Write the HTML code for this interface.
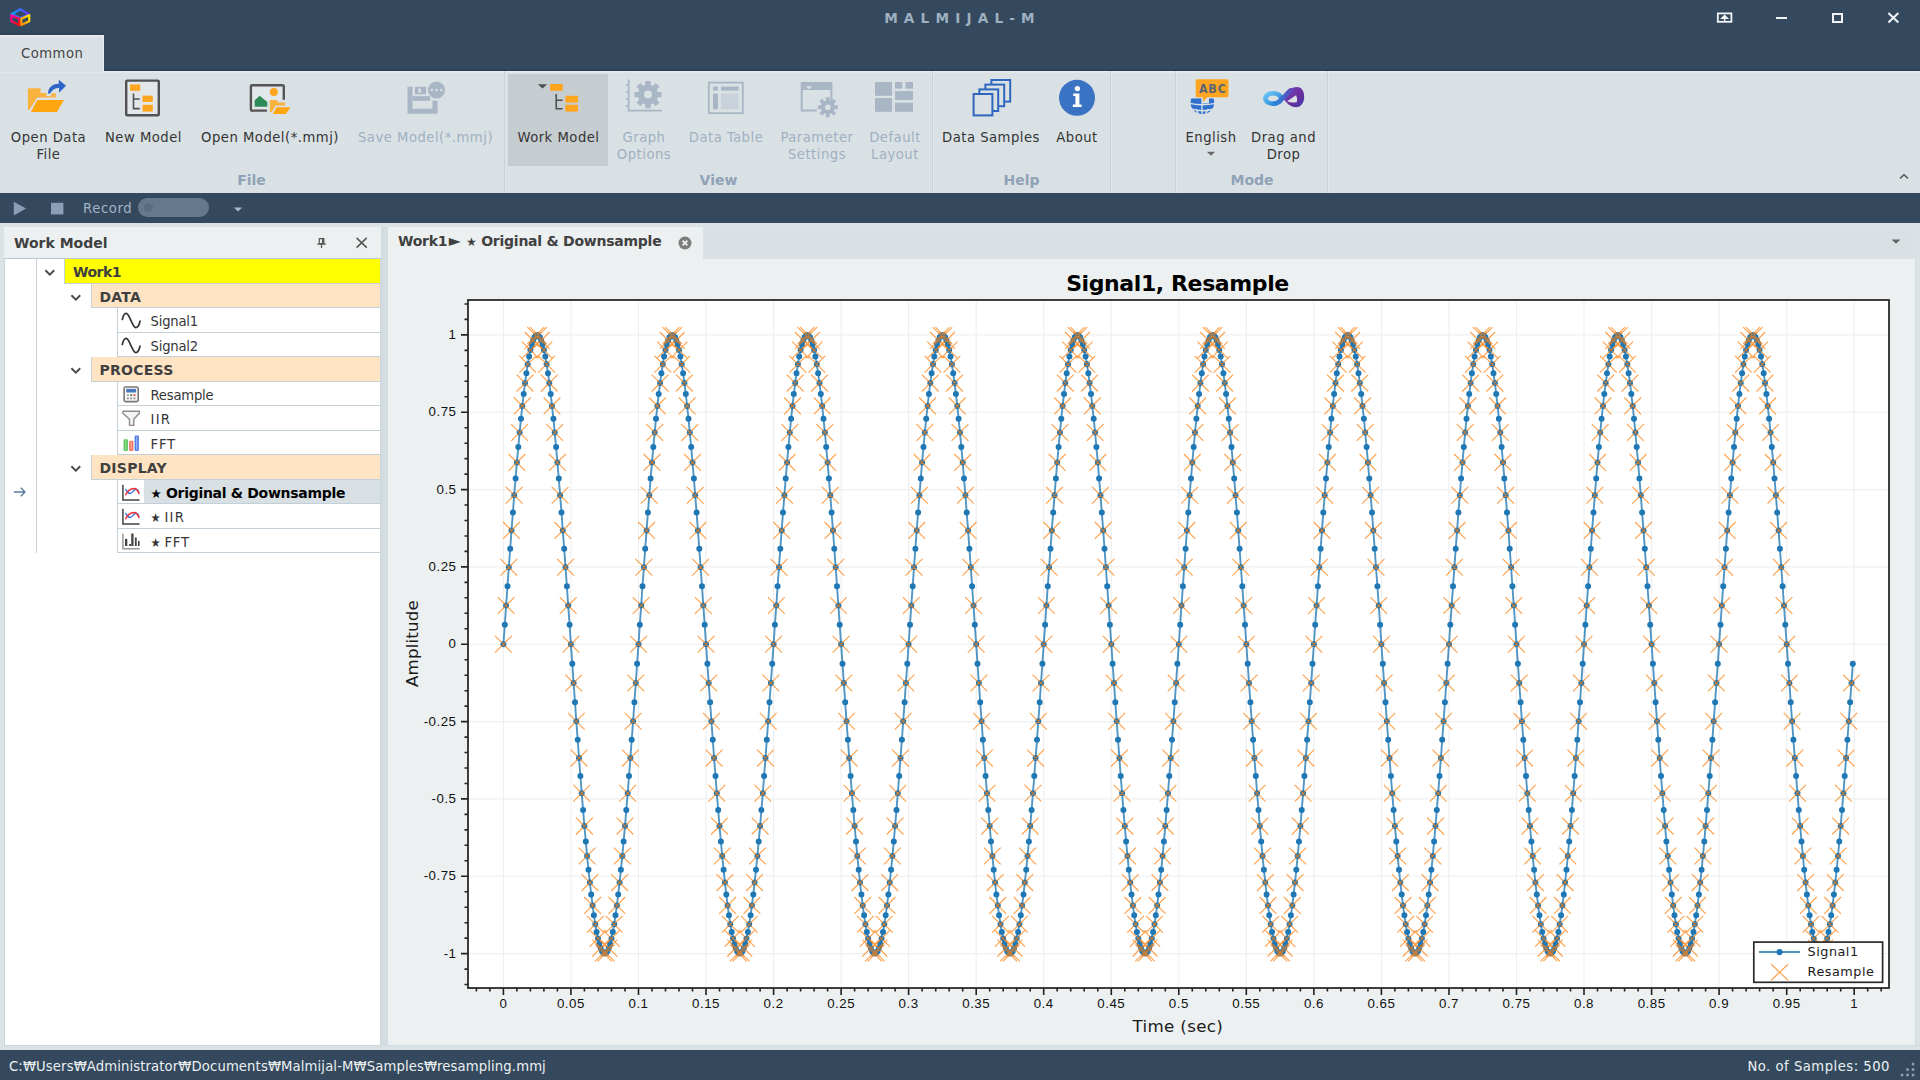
<!DOCTYPE html>
<html lang="en">
<head>
<meta charset="utf-8">
<title>MALMIJAL-M</title>
<style>
html,body{margin:0;padding:0;background:#dbe2e5;}
body{width:1920px;height:1080px;overflow:hidden;position:relative;
 font-family:"DejaVu Sans Condensed","Liberation Sans","Noto Sans CJK KR",sans-serif;font-size:14.67px;letter-spacing:.5px;color:#3b3b3b;}
.abs{position:absolute}
#titlebar{left:0;top:0;width:1920px;height:70.6px;background:#34495e;box-shadow:inset 0 -1.6px 0 #2d3f54}
#apptitle{left:0;top:10px;width:1920px;box-sizing:border-box;padding-left:5px;text-align:center;font-weight:bold;font-family:'DejaVu Sans','Liberation Sans',sans-serif;font-size:13.6px;letter-spacing:6.2px;color:#9fb0c0;line-height:17px}
#tabCommon{left:0;top:35px;width:104.4px;height:37.2px;background:#dae1e4;color:#454545;text-align:center;line-height:35px;box-sizing:border-box;box-shadow:0 -1.5px 0 #2e4056, inset 0 1.5px 0 #e8edef, inset -1px 0 0 #e6ebee}
#ribbon{left:0;top:70.6px;width:1920px;height:122.4px;background:#dae1e4;box-shadow:inset 0 1.4px 0 #e6ebee}
.sep{top:71px;width:1px;height:122px;background:#c8d1d6;box-shadow:1px 0 0 #e1e7ea}
.lbl{top:129px;width:200px;margin-left:-100px;text-align:center;line-height:16.5px;white-space:nowrap;color:#343434}
.lbl.dis{color:#9fb0c2}
.grp{top:171px;font-family:'DejaVu Sans','Liberation Sans',sans-serif;font-size:14px;letter-spacing:0;font-weight:bold;color:#8fa2b7;text-align:center;width:80px;margin-left:-40px;line-height:18px}
#quick{left:0;top:193px;width:1920px;height:30.3px;background:#34495e}
#status{left:0;top:1050px;width:1920px;height:30px;background:#34495e;color:#ecf0f1;line-height:32px}
#lp{left:4px;top:227px;width:377px;height:819px;background:#ecf0f1}
#lph{left:10px;top:6.2px;font-weight:bold;color:#404040;line-height:20px;font-family:'DejaVu Sans','Liberation Sans',sans-serif;font-size:14px;letter-spacing:0}
#tree{left:0;top:31px;width:377px;height:788px;background:#fff;border-top:1px solid #b9c9d4;box-sizing:border-box;border-left:1px solid #c9d5dc;border-right:1px solid #c9d5dc;border-bottom:1px solid #cfd9de}
.row{position:absolute;right:0;height:24.5px;box-sizing:border-box;border-bottom:1px solid #c3d0d8;border-left:1px solid #c3d0d8;line-height:24.5px;white-space:nowrap;color:#363636}
.row b{color:#404040;font-family:'DejaVu Sans','Liberation Sans',sans-serif;font-size:14px;letter-spacing:inherit}
.row.lf{letter-spacing:-.2px;line-height:25.9px}
.st{font-size:12.5px}
.tri{font-size:15.5px;line-height:10px;margin-left:1.5px;position:relative;top:.3px}
.st2{font-size:12px;margin-left:1px}
.chev{position:absolute}
#doc{left:388px;top:227px;width:1528px;height:819px;background:#ecf0f1;box-sizing:border-box;border-bottom:1px solid #d3dce1;border-right:1px solid #d3dce1}
#tabstrip{left:315px;top:0;width:1213px;height:32px;background:#dae1e4}
#doctab{left:10px;top:4.1px;font-weight:bold;color:#404040;line-height:20px;white-space:nowrap;font-family:'DejaVu Sans','Liberation Sans',sans-serif;font-size:14px;letter-spacing:-.25px}
</style>
</head>
<body>
<div id="titlebar" class="abs"></div>
<svg class="abs" style="left:8px;top:6px" width="24" height="22" viewBox="8 6 24 22">
<defs>
<linearGradient id="cg1" x1="0" y1="0" x2="1" y2="0"><stop offset="0" stop-color="#08a8ff"/><stop offset="1" stop-color="#6a2cff"/></linearGradient>
<linearGradient id="cg2" x1="0" y1="0" x2="0.6" y2="1"><stop offset="0" stop-color="#ff00b0"/><stop offset="1" stop-color="#ff0a18"/></linearGradient>
<linearGradient id="cg3" x1="1" y1="0" x2="0" y2="1"><stop offset="0" stop-color="#ffe600"/><stop offset="1" stop-color="#ff8a00"/></linearGradient>
</defs>
<path d="M20.300 9.300L29 14.200L20.300 18L11.600 14.200Z" fill="none" stroke="url(#cg1)" stroke-width="2.300" stroke-linejoin="round"/>
<path d="M11.400 15.200L19.300 18.800V25L11.400 21.300Z" fill="none" stroke="url(#cg2)" stroke-width="2.300" stroke-linejoin="round"/>
<path d="M29.200 15.200L21.300 18.800V25L29.200 21.300Z" fill="none" stroke="url(#cg3)" stroke-width="2.300" stroke-linejoin="round"/>
</svg>
<div id="apptitle" class="abs">MALMIJAL-M</div>
<svg class="abs" style="left:1714px;top:10px" width="22" height="16" viewBox="1714 10 22 16">
<rect x="1717.800" y="13.400" width="13.600" height="8.400" fill="none" stroke="#f2f4f6" stroke-width="1.800"/>
<path d="M1724.600 21V16.500M1721.800 18.300L1724.600 15.500L1727.400 18.300Z" fill="#f2f4f6" stroke="#f2f4f6" stroke-width="1.400"/>
</svg>
<div class="abs" style="left:1776px;top:17px;width:11px;height:2px;background:#f2f4f6"></div>
<div class="abs" style="left:1832px;top:13px;width:10.500px;height:9.500px;box-sizing:border-box;border:2px solid #f2f4f6"></div>
<svg class="abs" style="left:1886px;top:11px" width="14" height="14" viewBox="1886 11 14 14"><path d="M1888.400 13L1898.400 22.400M1898.400 13L1888.400 22.400" stroke="#f2f4f6" stroke-width="2" fill="none"/></svg>

<div id="ribbon" class="abs"></div>
<div id="tabCommon" class="abs">Common</div>
<div class="abs" style="left:508px;top:74px;width:100px;height:92px;background:#c6cdd1"></div>
<div class="abs sep" style="left:504px"></div>
<div class="abs sep" style="left:932px"></div>
<div class="abs sep" style="left:1110px"></div>
<div class="abs sep" style="left:1175px"></div>
<div class="abs sep" style="left:1327px"></div>
<!-- Open Data File -->
<svg class="abs" style="left:24px;top:76px" width="46" height="40" viewBox="24 76 46 40">
<path d="M27.900 88.300H40.600V93.100H46.100L46.500 96.200H51L51.500 93.300H55.800V97.600H37.100L29.200 110L27.900 109.500Z" fill="#fab23f"/>
<path d="M37.300 100.100H64L56.900 111.900H30.800Z" fill="#ffa50f"/>
<path d="M48 93.400C48.300 87.500 52.500 83.600 58.800 83.800V79.700L66 85.800L59.100 92.700V88C55 87.900 51.800 89.900 50.200 93.600Z" fill="#2f65c8"/>
</svg>
<!-- New Model -->
<svg class="abs" style="left:122px;top:76px" width="42" height="44" viewBox="122 76 42 44">
<rect x="126.200" y="80.600" width="32.600" height="34.600" rx="1" fill="#e2e7ea" stroke="#525252" stroke-width="2.400"/>
<path d="M133.500 93.500V108.600H139.800M133.500 99H139.800" fill="none" stroke="#505050" stroke-width="1.6"/>
<g fill="#ffa51f"><rect x="130" y="84.4" width="10.2" height="6.4"/><rect x="142.5" y="95.6" width="10.3" height="6.4"/><rect x="142.5" y="104.8" width="10.3" height="6.8"/></g>
</svg>
<!-- Open Model -->
<svg class="abs" style="left:246px;top:80px" width="48" height="38" viewBox="246 80 48 38">
<path d="M252 86.300H282.600V100H268V109.500H252Z" fill="#e2e7ea"/>
<path d="M267 110.600H252.400A1.100 1.100 0 0 1 250.900 109.500V86.300A1.100 1.100 0 0 1 252 85.200H282.700A1.100 1.100 0 0 1 283.800 86.300V99.800" fill="none" stroke="#555" stroke-width="2.400"/>
<path d="M254.700 106.700V100.200L259.700 95.800L267.300 102V106.700Z" fill="#2e8b57"/>
<circle cx="273.800" cy="91.900" r="4" fill="#ffa51f"/>
<path d="M269.900 100H276.600L278.300 102.600H285.100V105.600H275.600L271.400 112.600L269.900 112Z" fill="#fab23f"/>
<path d="M276.600 107.300H290.500L285.900 114.100H272.700Z" fill="#ffa50f"/>
</svg>
<!-- Save Model (disabled) -->
<svg class="abs" style="left:404px;top:78px" width="46" height="40" viewBox="404 78 46 40">
<g fill="#a9b6c6">
<path d="M407.5 86.8H412.5V108.8H432.5V100.8H437.5V113.7H407.5Z"/>
<path d="M412.5 96.2H430V100.8H412.5Z"/>
<path d="M415 86.8H426V94.3H415ZM418.2 88.6V92.6H421V88.6Z" fill-rule="evenodd"/>
<circle cx="436.5" cy="90" r="8.6"/>
</g>
<g fill="#dae1e4"><circle cx="431.7" cy="90" r="1.3"/><circle cx="436.5" cy="90" r="1.3"/><circle cx="441.3" cy="90" r="1.3"/></g>
</svg>
<!-- Work Model -->
<svg class="abs" style="left:534px;top:80px" width="48" height="36" viewBox="534 80 48 36">
<path d="M537.8 84.2H547.2L542.5 88.6Z" fill="#505050"/>
<path d="M556.2 94V108.8H562.6M556.2 100.2H562.6" fill="none" stroke="#505050" stroke-width="1.6"/>
<g fill="#ffa51f"><rect x="550" y="84" width="12.8" height="6.8"/><rect x="565.4" y="95.8" width="12.6" height="6.8"/><rect x="565.4" y="104.8" width="12.6" height="6.8"/></g>
</svg>
<!-- Graph Options (disabled) -->
<svg class="abs" style="left:622px;top:76px" width="44" height="40" viewBox="622 76 44 40">
<path d="M628.6 79.5V110.6H662" fill="none" stroke="#a9b6c6" stroke-width="1.7"/>
<path d="M625.7 84.9H628M625.7 92H628M625.7 99H628M625.7 106H628" stroke="#a9b6c6" stroke-width="1.5"/>
<g transform="translate(648 94.6)" fill="#a9b6c6">
<circle r="10.2"/>
<g id="gt"><rect x="-2.700" y="-13.600" width="5.400" height="27.200" rx=".6"/></g>
<use href="#gt" transform="rotate(45)"/><use href="#gt" transform="rotate(90)"/><use href="#gt" transform="rotate(135)"/>
<circle r="4" fill="#dae1e4"/>
</g>
</svg>
<!-- Data Table (disabled) -->
<svg class="abs" style="left:704px;top:78px" width="44" height="40" viewBox="704 78 44 40">
<rect x="708.8" y="82.6" width="34" height="30.6" fill="none" stroke="#a9b6c6" stroke-width="1.8"/>
<g fill="#a9b6c6"><rect x="713" y="86.6" width="5" height="4"/><rect x="721" y="86.6" width="17.6" height="4"/><rect x="713" y="93.6" width="5" height="15.6"/></g>
<rect x="721" y="93.6" width="17.6" height="15.6" fill="#c9d2da"/>
</svg>
<!-- Parameter Settings (disabled) -->
<svg class="abs" style="left:796px;top:78px" width="46" height="42" viewBox="796 78 46 42">
<path d="M800.7 82H832.4V103H830.4V90H802.7V109.5H817V111.5H800.7Z" fill="#a9b6c6"/>
<path d="M805.5 86.2H812.5L809 89.2Z" fill="#dae1e4"/>
<g transform="translate(827.8 107.2)" fill="#a9b6c6">
<circle r="7"/>
<g id="gt2"><rect x="-1.9" y="-10" width="3.8" height="20"/></g>
<use href="#gt2" transform="rotate(45)"/><use href="#gt2" transform="rotate(90)"/><use href="#gt2" transform="rotate(135)"/>
<circle r="2.8" fill="#dae1e4"/>
</g>
</svg>
<!-- Default Layout (disabled) -->
<svg class="abs" style="left:872px;top:80px" width="44" height="34" viewBox="872 80 44 34">
<g fill="#a9b6c6"><rect x="875" y="82" width="17" height="13.8"/><rect x="875" y="98" width="17" height="13.8"/><rect x="895" y="82" width="7.4" height="6.6"/><rect x="905.4" y="82" width="7.6" height="6.6"/><rect x="895" y="91" width="18" height="9"/><rect x="895" y="102.6" width="18" height="9.2"/></g>
</svg>
<!-- Data Samples -->
<svg class="abs" style="left:970px;top:76px" width="44" height="44" viewBox="970 76 44 44">
<g fill="#dae1e4" stroke="#2e66c0" stroke-width="2"><rect x="991.4" y="80" width="18.8" height="21.6"/><rect x="985.4" y="84.6" width="18.8" height="21.6"/><rect x="979.4" y="89.4" width="18.8" height="21.6"/><rect x="973.6" y="94" width="18.8" height="21.4"/></g>
</svg>
<!-- About -->
<svg class="abs" style="left:1056px;top:78px" width="42" height="42" viewBox="1056 78 42 42">
<circle cx="1077" cy="97.8" r="18" fill="#3a72c4"/>
<circle cx="1077.4" cy="88.6" r="2.6" fill="#fff"/>
<path d="M1073.2 93.4H1079.4V104.4H1081.6V107H1072.8V104.4H1075.4V96H1073.2Z" fill="#fff"/>
</svg>
<!-- English -->
<svg class="abs" style="left:1186px;top:76px" width="46" height="42" viewBox="1186 76 46 42">
<defs><clipPath id="gclip"><path d="M1188 98.600H1201.600V103.600H1209V98.600H1217V116H1188Z"/></clipPath></defs>
<g clip-path="url(#gclip)">
<circle cx="1202.400" cy="102.400" r="11.800" fill="#2f6fd0"/>
<path d="M1202 89V116M1189.500 103.400Q1202 106 1215.500 103.400M1192 109.200Q1202 112.200 1213 109.200M1196 109Q1197 112 1199.500 115M1208 109Q1207 112 1204.500 115" stroke="#dae1e4" stroke-width="1.400" fill="none"/>
</g>
<path d="M1196.900 79.250H1227.300A1.200 1.200 0 0 1 1228.500 80.450V96.100A1.200 1.200 0 0 1 1227.300 97.300H1207.400L1203 101.900V97.300H1196.900A1.200 1.200 0 0 1 1195.700 96.100V80.450A1.200 1.200 0 0 1 1196.900 79.250Z" fill="#ffa51f"/>
<text x="1212.800" y="92.900" text-anchor="middle" font-family="'DejaVu Sans Condensed','Liberation Sans',sans-serif" font-weight="bold" font-size="12.300" fill="#5a6474" letter-spacing="0.900">ABC</text>
</svg>
<!-- Drag and Drop -->
<svg class="abs" style="left:1258px;top:82px" width="50" height="30" viewBox="1258 82 50 30">
<defs>
<linearGradient id="lgb" x1="0" y1="0" x2="1" y2="1"><stop offset="0" stop-color="#6cc6f2"/><stop offset="1" stop-color="#1f7fd6"/></linearGradient>
<linearGradient id="lgp" x1="0" y1="0" x2="1" y2="1"><stop offset="0" stop-color="#7a4cc0"/><stop offset=".6" stop-color="#6a2c9c"/><stop offset="1" stop-color="#3a44b0"/></linearGradient>
<linearGradient id="lgx" x1="0" y1="1" x2="1" y2="0"><stop offset="0" stop-color="#2a86da"/><stop offset="1" stop-color="#5a48b8"/></linearGradient>
</defs>
<path d="M1283 98C1285 91 1291 87 1297 87C1302 87 1304.200 91.500 1304.200 97C1304.200 103 1301 107.200 1296 107.200C1290.500 107.200 1286 103 1283 98ZM1287 101.300L1296 95.300C1297.200 97.500 1297.400 100 1296.700 102.200C1293.500 103 1290 102.600 1287 101.300Z" fill="url(#lgp)" fill-rule="evenodd"/>
<ellipse cx="1273.200" cy="98.400" rx="7.800" ry="5.200" fill="none" stroke="url(#lgb)" stroke-width="4.600"/>
<path d="M1274.500 103.800C1280 103 1284 96 1290.500 90.500" fill="none" stroke="url(#lgx)" stroke-width="4.600" stroke-linecap="round"/>
</svg>
<!-- labels -->
<div class="abs lbl" style="left:48.500px">Open Data<br>File</div>
<div class="abs lbl" style="left:143.500px">New Model</div>
<div class="abs lbl" style="left:270px">Open Model(*.mmj)</div>
<div class="abs lbl dis" style="left:425.500px">Save Model(*.mmj)</div>
<div class="abs lbl" style="left:558.500px">Work Model</div>
<div class="abs lbl dis" style="left:644px">Graph<br>Options</div>
<div class="abs lbl dis" style="left:726px">Data Table</div>
<div class="abs lbl dis" style="left:817px">Parameter<br>Settings</div>
<div class="abs lbl dis" style="left:895px">Default<br>Layout</div>
<div class="abs lbl" style="left:991px">Data Samples</div>
<div class="abs lbl" style="left:1077px">About</div>
<div class="abs lbl" style="left:1211px">English</div>
<div class="abs lbl" style="left:1283.500px">Drag and<br>Drop</div>
<svg class="abs" style="left:1205px;top:150px" width="12" height="8" viewBox="0 0 12 8"><path d="M1.800 1.800H10.200L6 5.800Z" fill="#6a6a6a"/></svg>
<div class="abs grp" style="left:251.500px">File</div>
<div class="abs grp" style="left:718.500px">View</div>
<div class="abs grp" style="left:1021.500px">Help</div>
<div class="abs grp" style="left:1252px">Mode</div>
<svg class="abs" style="left:1898px;top:172px" width="12" height="10" viewBox="0 0 12 10"><path d="M2 6.500L6 2.800L10 6.500" fill="none" stroke="#555" stroke-width="1.500"/></svg>

<div id="quick" class="abs">
<svg class="abs" style="left:10px;top:6px" width="60" height="20" viewBox="10 199 60 20">
<path d="M13.800 201.800V215.400L26 208.600Z" fill="#8a9fb6"/>
<rect x="51" y="202.800" width="12.400" height="11.600" fill="#8a9fb6"/>
</svg>
<div class="abs" style="left:83px;top:5.300px;color:#a3b4c6;line-height:20px;letter-spacing:.65px">Record</div>
<div class="abs" style="left:138px;top:5.100px;width:70.500px;height:19px;border-radius:9.500px;background:#66798c"></div>
<div class="abs" style="left:143.500px;top:10.100px;width:9px;height:9px;border-radius:5px;background:#5b6d7f"></div>
<svg class="abs" style="left:232px;top:13px" width="12" height="8" viewBox="0 0 12 8"><path d="M1.800 1.500H10.200L6 5.600Z" fill="#a9b8c8"/></svg>

</div>
<div id="lp" class="abs">
<div id="lph" class="abs">Work Model</div>
<svg class="abs" style="left:310px;top:8px" width="14" height="16" viewBox="314 235 14 16">
<path d="M319.300 238.600H323.800V243.600H319.300ZM317.300 244.200H325.800M321.500 244.400V247.900" fill="none" stroke="#555" stroke-width="1.200"/><rect x="322" y="238.600" width="1.800" height="5" fill="#555"/>
</svg>
<svg class="abs" style="left:350px;top:8px" width="16" height="16" viewBox="354 235 16 16"><path d="M356.600 237.900L366.700 247.600M366.700 237.900L356.600 247.600" stroke="#555" stroke-width="1.500" fill="none"/></svg>

<div id="tree" class="abs">
<div class="abs" style="left:30.500px;top:0;width:1px;height:293.500px;background:#c9d5dc"></div>
<div class="row" style="top:0.0px;left:58.500px;background:#ff0;padding-left:8.500px;line-height:25px"><b style="letter-spacing:-.5px">Work1</b></div>
<svg class="chev" style="left:38.6px;top:10.0px" width="12" height="8" viewBox="0 0 12 8"><path d="M1.400 1.300L5.800 5.600L10.200 1.300" fill="none" stroke="#484848" stroke-width="1.900"/></svg>
<div class="row" style="top:24.5px;left:86px;background:#ffe4c4;padding-left:7.500px;line-height:26px;letter-spacing:.25px"><b>DATA</b></div>
<svg class="chev" style="left:65.4px;top:34.5px" width="12" height="8" viewBox="0 0 12 8"><path d="M1.400 1.300L5.800 5.600L10.200 1.300" fill="none" stroke="#484848" stroke-width="1.900"/></svg>
<div class="row lf" style="top:49.0px;left:112px;padding-left:32.500px"><svg width="26" height="24" viewBox="0 0 26 24" style="position:absolute;left:0;top:0"><path d="M4.300 11.500C5.300 7 6.800 5.400 8.300 5.400C11.300 5.400 14.500 19.600 17.700 19.600C19.400 19.600 21 17.500 22 13.200" fill="none" stroke="#333" stroke-width="1.700" stroke-linecap="round"/></svg>Signal1</div>
<div class="row lf" style="top:73.5px;left:112px;padding-left:32.500px"><svg width="26" height="24" viewBox="0 0 26 24" style="position:absolute;left:0;top:0"><path d="M4.300 11.500C5.300 7 6.800 5.400 8.300 5.400C11.300 5.400 14.500 19.600 17.700 19.600C19.400 19.600 21 17.500 22 13.200" fill="none" stroke="#333" stroke-width="1.700" stroke-linecap="round"/></svg>Signal2</div>
<div class="row" style="top:98.0px;left:86px;background:#ffe4c4;padding-left:7.500px;line-height:26px;letter-spacing:.25px"><b>PROCESS</b></div>
<svg class="chev" style="left:65.4px;top:108.0px" width="12" height="8" viewBox="0 0 12 8"><path d="M1.400 1.300L5.800 5.600L10.200 1.300" fill="none" stroke="#484848" stroke-width="1.900"/></svg>
<div class="row lf" style="top:122.5px;left:112px;padding-left:32.500px"><svg width="26" height="24" viewBox="0 0 26 24" style="position:absolute;left:0;top:0"><rect x="6.100" y="5" width="14.100" height="14.600" rx="1.600" fill="#f8f8f8" stroke="#777" stroke-width="1.600"/><rect x="8.200" y="6.900" width="9.900" height="3.600" fill="#4a78c2"/><g fill="#9a9a9a"><rect x="8.900" y="12.400" width="2" height="1.600"/><rect x="12.200" y="12.400" width="2" height="1.600"/><rect x="8.900" y="15.400" width="2" height="1.900"/><rect x="12.200" y="15.400" width="2" height="1.900"/><rect x="15.500" y="15.400" width="2" height="1.900"/></g><rect x="15.500" y="12.400" width="2" height="1.600" fill="#e0443e"/><rect x="12.200" y="12.400" width="2" height="1.600" fill="#5a8a5a"/></svg>Resample</div>
<div class="row lf" style="top:147.0px;left:112px;padding-left:32.500px"><svg width="26" height="24" viewBox="0 0 26 24" style="position:absolute;left:0;top:0"><path d="M4.900 5.300H21.400V7.200L15.800 13.300V19.400H11.500V13.300L4.900 7.200Z" fill="#f4f4f4" stroke="#8c8c8c" stroke-width="1.400" stroke-linejoin="round"/></svg><span style="letter-spacing:1.300px">IIR</span></div>
<div class="row lf" style="top:171.5px;left:112px;padding-left:32.500px"><svg width="26" height="24" viewBox="0 0 26 24" style="position:absolute;left:0;top:0"><rect x="5.600" y="8.200" width="4.300" height="11.800" rx="1.200" fill="#58c058"/><rect x="7" y="9" width="1.400" height="10" fill="#8fe08f"/><rect x="11.100" y="9.700" width="4.300" height="10.300" rx="1.200" fill="#f0705a"/><rect x="12.500" y="10.500" width="1.400" height="8.500" fill="#f8a898"/><rect x="16.600" y="4.600" width="4.300" height="15.400" rx="1.200" fill="#4f80e6"/><rect x="18" y="5.500" width="1.400" height="13.500" fill="#8fb0f4"/></svg><span style="letter-spacing:.8px">FFT</span></div>
<div class="row" style="top:196.0px;left:86px;background:#ffe4c4;padding-left:7.500px;line-height:26px;letter-spacing:.25px"><b>DISPLAY</b></div>
<svg class="chev" style="left:65.4px;top:206.0px" width="12" height="8" viewBox="0 0 12 8"><path d="M1.400 1.300L5.800 5.600L10.200 1.300" fill="none" stroke="#484848" stroke-width="1.900"/></svg>
<div class="row lf" style="top:220.5px;left:112px;padding-left:32.500px"><svg width="26" height="24" viewBox="0 0 26 24" style="position:absolute;left:0;top:0"><path d="M4.900 4.700V19.900H21.600" fill="none" stroke="#444" stroke-width="1.500"/><path d="M7.500 9C9 11 10 13.500 12 13.500C14.500 13.500 15.500 9.200 18 9.200C19.500 9.200 20.500 11 21 12.500" fill="none" stroke="#3f78e0" stroke-width="1.500"/><path d="M7.500 15.200C9.500 11 12.500 8.200 16.400 8.400C18.800 8.600 20.200 11 21 14" fill="none" stroke="#f0303a" stroke-width="1.500"/></svg><div class="abs" style="left:26.300px;top:0;right:0;bottom:0;background:#d9e0e3"></div><b style="color:#000;position:relative;font-size:14px;letter-spacing:-.3px"><span class="st">★</span> Original &amp; Downsample</b></div>
<div class="row lf" style="top:245.0px;left:112px;padding-left:32.500px"><svg width="26" height="24" viewBox="0 0 26 24" style="position:absolute;left:0;top:0"><path d="M4.900 4.700V19.900H21.600" fill="none" stroke="#444" stroke-width="1.500"/><path d="M7.500 9C9 11 10 13.500 12 13.500C14.500 13.500 15.500 9.200 18 9.200C19.500 9.200 20.500 11 21 12.500" fill="none" stroke="#3f78e0" stroke-width="1.500"/><path d="M7.500 15.200C9.500 11 12.500 8.200 16.400 8.400C18.800 8.600 20.200 11 21 14" fill="none" stroke="#f0303a" stroke-width="1.500"/></svg><span class="st">★</span> <span style="letter-spacing:1.300px">IIR</span></div>
<div class="row lf" style="top:269.5px;left:112px;padding-left:32.500px"><svg width="26" height="24" viewBox="0 0 26 24" style="position:absolute;left:0;top:0"><path d="M4.900 4.700V19.800H21.600" fill="none" stroke="#999" stroke-width="1.500"/><g fill="#444"><rect x="7" y="9.900" width="2.300" height="7.100"/><rect x="11.200" y="15" width="1.800" height="2"/><rect x="13.250" y="4.500" width="2.300" height="12.500"/><rect x="16.900" y="8.400" width="1.800" height="8.600"/><rect x="20" y="12" width="1.600" height="5"/></g></svg><span class="st">★</span> <span style="letter-spacing:.8px">FFT</span></div>
<svg class="abs" style="left:8px;top:227px" width="14" height="12" viewBox="0 0 14 12"><path d="M1 6H12M7.800 1.800L12 6L7.800 10.200" fill="none" stroke="#5a7a9a" stroke-width="1.300"/></svg>

</div>
</div>
<div class="abs" style="left:381px;top:227px;width:7px;height:819px;background:#d3dce1"></div>
<div id="doc" class="abs">
<div id="tabstrip" class="abs"></div>
<div id="doctab" class="abs">Work1<span class="tri">►</span> <span class="st2">★</span> Original &amp; Downsample</div>
<svg class="abs" style="left:290px;top:8.500px" width="14" height="14" viewBox="0 0 14 14"><circle cx="7" cy="7" r="6.500" fill="#7d7d7d"/><path d="M4.600 4.600L9.400 9.400M9.400 4.600L4.600 9.400" stroke="#ecf0f1" stroke-width="1.800"/></svg>
<svg class="abs" style="left:1502px;top:11px" width="12" height="8" viewBox="0 0 12 8"><path d="M1.500 1.500H10.500L6 5.800Z" fill="#666"/></svg>

</div>
<svg id="plot" width="1528" height="787" viewBox="388 259 1528 787" style="position:absolute;left:388px;top:259px">
<rect x="468.0" y="300.0" width="1421.0" height="688.0" fill="#fff"/>
<path d="M503.4 300.0V988.0M570.9 300.0V988.0M638.5 300.0V988.0M706.0 300.0V988.0M773.6 300.0V988.0M841.1 300.0V988.0M908.6 300.0V988.0M976.2 300.0V988.0M1043.7 300.0V988.0M1111.3 300.0V988.0M1178.8 300.0V988.0M1246.3 300.0V988.0M1313.9 300.0V988.0M1381.4 300.0V988.0M1449.0 300.0V988.0M1516.5 300.0V988.0M1584.0 300.0V988.0M1651.6 300.0V988.0M1719.1 300.0V988.0M1786.7 300.0V988.0M1854.2 300.0V988.0M468.0 953.6H1889.0M468.0 876.3H1889.0M468.0 798.9H1889.0M468.0 721.6H1889.0M468.0 644.2H1889.0M468.0 566.9H1889.0M468.0 489.6H1889.0M468.0 412.2H1889.0M468.0 334.9H1889.0" stroke="#efefef" stroke-width="1.1" fill="none"/>
<polyline fill="none" stroke="#1f77b4" stroke-opacity="0.78" stroke-width="1.900" stroke-linejoin="round" points="503.4,644.2 504.8,624.8 506.1,605.5 507.5,586.3 508.8,567.3 510.2,548.7 511.5,530.4 512.9,512.5 514.2,495.2 515.6,478.5 516.9,462.4 518.3,447.1 519.6,432.5 521.0,418.7 522.3,405.9 523.7,394.0 525.0,383.1 526.4,373.2 527.7,364.3 529.1,356.6 530.4,350.0 531.8,344.6 533.1,340.4 534.5,337.3 535.8,335.5 537.2,334.9 538.5,335.5 539.9,337.3 541.2,340.4 542.6,344.6 543.9,350.0 545.3,356.6 546.6,364.3 548.0,373.2 549.3,383.1 550.7,394.0 552.0,405.9 553.4,418.7 554.7,432.5 556.1,447.1 557.4,462.4 558.8,478.5 560.1,495.2 561.5,512.5 562.8,530.4 564.2,548.7 565.5,567.3 566.9,586.3 568.2,605.5 569.6,624.8 570.9,644.2 572.3,663.7 573.6,683.0 575.0,702.2 576.3,721.2 577.7,739.8 579.0,758.1 580.4,776.0 581.7,793.3 583.1,810.0 584.4,826.1 585.8,841.4 587.1,856.0 588.5,869.8 589.9,882.6 591.2,894.5 592.6,905.4 593.9,915.3 595.3,924.2 596.6,931.9 598.0,938.5 599.3,943.9 600.7,948.1 602.0,951.2 603.4,953.0 604.7,953.6 606.1,953.0 607.4,951.2 608.8,948.1 610.1,943.9 611.5,938.5 612.8,931.9 614.2,924.2 615.5,915.3 616.9,905.4 618.2,894.5 619.6,882.6 620.9,869.8 622.3,856.0 623.6,841.4 625.0,826.1 626.3,810.0 627.7,793.3 629.0,776.0 630.4,758.1 631.7,739.8 633.1,721.2 634.4,702.2 635.8,683.0 637.1,663.7 638.5,644.3 639.8,624.8 641.2,605.5 642.5,586.3 643.9,567.3 645.2,548.7 646.6,530.4 647.9,512.5 649.3,495.2 650.6,478.5 652.0,462.4 653.3,447.1 654.7,432.5 656.0,418.7 657.4,405.9 658.7,394.0 660.1,383.1 661.4,373.2 662.8,364.3 664.1,356.6 665.5,350.0 666.8,344.6 668.2,340.4 669.5,337.3 670.9,335.5 672.2,334.9 673.6,335.5 675.0,337.3 676.3,340.4 677.7,344.6 679.0,350.0 680.4,356.6 681.7,364.3 683.1,373.2 684.4,383.1 685.8,394.0 687.1,405.9 688.5,418.7 689.8,432.5 691.2,447.1 692.5,462.4 693.9,478.5 695.2,495.2 696.6,512.5 697.9,530.4 699.3,548.7 700.6,567.3 702.0,586.3 703.3,605.5 704.7,624.8 706.0,644.2 707.4,663.7 708.7,683.0 710.1,702.2 711.4,721.2 712.8,739.8 714.1,758.1 715.5,776.0 716.8,793.3 718.2,810.0 719.5,826.1 720.9,841.4 722.2,856.0 723.6,869.8 724.9,882.6 726.3,894.5 727.6,905.4 729.0,915.3 730.3,924.2 731.7,931.9 733.0,938.5 734.4,943.9 735.7,948.1 737.1,951.2 738.4,953.0 739.8,953.6 741.1,953.0 742.5,951.2 743.8,948.1 745.2,943.9 746.5,938.5 747.9,931.9 749.2,924.2 750.6,915.3 751.9,905.4 753.3,894.5 754.6,882.6 756.0,869.8 757.4,856.0 758.7,841.4 760.1,826.1 761.4,810.0 762.8,793.3 764.1,776.0 765.5,758.1 766.8,739.8 768.2,721.2 769.5,702.2 770.9,683.0 772.2,663.7 773.6,644.3 774.9,624.8 776.3,605.5 777.6,586.3 779.0,567.3 780.3,548.7 781.7,530.4 783.0,512.5 784.4,495.2 785.7,478.5 787.1,462.4 788.4,447.1 789.8,432.5 791.1,418.7 792.5,405.9 793.8,394.0 795.2,383.1 796.5,373.2 797.9,364.3 799.2,356.6 800.6,350.0 801.9,344.6 803.3,340.4 804.6,337.3 806.0,335.5 807.3,334.9 808.7,335.5 810.0,337.3 811.4,340.4 812.7,344.6 814.1,350.0 815.4,356.6 816.8,364.3 818.1,373.2 819.5,383.1 820.8,394.0 822.2,405.9 823.5,418.7 824.9,432.5 826.2,447.1 827.6,462.4 828.9,478.5 830.3,495.2 831.6,512.5 833.0,530.4 834.3,548.7 835.7,567.3 837.0,586.3 838.4,605.5 839.7,624.8 841.1,644.2 842.5,663.7 843.8,683.0 845.2,702.2 846.5,721.2 847.9,739.8 849.2,758.1 850.6,776.0 851.9,793.3 853.3,810.0 854.6,826.1 856.0,841.4 857.3,856.0 858.7,869.8 860.0,882.6 861.4,894.5 862.7,905.4 864.1,915.3 865.4,924.2 866.8,931.9 868.1,938.5 869.5,943.9 870.8,948.1 872.2,951.2 873.5,953.0 874.9,953.6 876.2,953.0 877.6,951.2 878.9,948.1 880.3,943.9 881.6,938.5 883.0,931.9 884.3,924.2 885.7,915.3 887.0,905.4 888.4,894.5 889.7,882.6 891.1,869.8 892.4,856.0 893.8,841.4 895.1,826.1 896.5,810.0 897.8,793.3 899.2,776.0 900.5,758.1 901.9,739.8 903.2,721.2 904.6,702.2 905.9,683.0 907.3,663.7 908.6,644.3 910.0,624.8 911.3,605.5 912.7,586.3 914.0,567.3 915.4,548.7 916.7,530.4 918.1,512.5 919.4,495.2 920.8,478.5 922.1,462.4 923.5,447.1 924.8,432.5 926.2,418.7 927.6,405.9 928.9,394.0 930.3,383.1 931.6,373.2 933.0,364.3 934.3,356.6 935.7,350.0 937.0,344.6 938.4,340.4 939.7,337.3 941.1,335.5 942.4,334.9 943.8,335.5 945.1,337.3 946.5,340.4 947.8,344.6 949.2,350.0 950.5,356.6 951.9,364.3 953.2,373.2 954.6,383.1 955.9,394.0 957.3,405.9 958.6,418.7 960.0,432.5 961.3,447.1 962.7,462.4 964.0,478.5 965.4,495.2 966.7,512.5 968.1,530.4 969.4,548.7 970.8,567.3 972.1,586.3 973.5,605.5 974.8,624.8 976.2,644.2 977.5,663.7 978.9,683.0 980.2,702.2 981.6,721.2 982.9,739.8 984.3,758.1 985.6,776.0 987.0,793.3 988.3,810.0 989.7,826.1 991.0,841.4 992.4,856.0 993.7,869.8 995.1,882.6 996.4,894.5 997.8,905.4 999.1,915.3 1000.5,924.2 1001.8,931.9 1003.2,938.5 1004.5,943.9 1005.9,948.1 1007.2,951.2 1008.6,953.0 1010.0,953.6 1011.3,953.0 1012.7,951.2 1014.0,948.1 1015.4,943.9 1016.7,938.5 1018.1,931.9 1019.4,924.2 1020.8,915.3 1022.1,905.4 1023.5,894.5 1024.8,882.6 1026.2,869.8 1027.5,856.0 1028.9,841.4 1030.2,826.1 1031.6,810.0 1032.9,793.3 1034.3,776.0 1035.6,758.1 1037.0,739.8 1038.3,721.2 1039.7,702.2 1041.0,683.0 1042.4,663.7 1043.7,644.3 1045.1,624.8 1046.4,605.5 1047.8,586.3 1049.1,567.3 1050.5,548.7 1051.8,530.4 1053.2,512.5 1054.5,495.2 1055.9,478.5 1057.2,462.4 1058.6,447.1 1059.9,432.5 1061.3,418.7 1062.6,405.9 1064.0,394.0 1065.3,383.1 1066.7,373.2 1068.0,364.3 1069.4,356.6 1070.7,350.0 1072.1,344.6 1073.4,340.4 1074.8,337.3 1076.1,335.5 1077.5,334.9 1078.8,335.5 1080.2,337.3 1081.5,340.4 1082.9,344.6 1084.2,350.0 1085.6,356.6 1086.9,364.3 1088.3,373.2 1089.6,383.1 1091.0,394.0 1092.3,405.9 1093.7,418.7 1095.1,432.5 1096.4,447.1 1097.8,462.4 1099.1,478.5 1100.5,495.2 1101.8,512.5 1103.2,530.4 1104.5,548.7 1105.9,567.3 1107.2,586.3 1108.6,605.5 1109.9,624.8 1111.3,644.2 1112.6,663.7 1114.0,683.0 1115.3,702.2 1116.7,721.2 1118.0,739.8 1119.4,758.1 1120.7,776.0 1122.1,793.3 1123.4,810.0 1124.8,826.1 1126.1,841.4 1127.5,856.0 1128.8,869.8 1130.2,882.6 1131.5,894.5 1132.9,905.4 1134.2,915.3 1135.6,924.2 1136.9,931.9 1138.3,938.5 1139.6,943.9 1141.0,948.1 1142.3,951.2 1143.7,953.0 1145.0,953.6 1146.4,953.0 1147.7,951.2 1149.1,948.1 1150.4,943.9 1151.8,938.5 1153.1,931.9 1154.5,924.2 1155.8,915.3 1157.2,905.4 1158.5,894.5 1159.9,882.6 1161.2,869.8 1162.6,856.0 1163.9,841.4 1165.3,826.1 1166.6,810.0 1168.0,793.3 1169.3,776.0 1170.7,758.1 1172.0,739.8 1173.4,721.2 1174.7,702.2 1176.1,683.0 1177.4,663.7 1178.8,644.3 1180.2,624.8 1181.5,605.5 1182.9,586.3 1184.2,567.3 1185.6,548.7 1186.9,530.4 1188.3,512.5 1189.6,495.2 1191.0,478.5 1192.3,462.4 1193.7,447.1 1195.0,432.5 1196.4,418.7 1197.7,405.9 1199.1,394.0 1200.4,383.1 1201.8,373.2 1203.1,364.3 1204.5,356.6 1205.8,350.0 1207.2,344.6 1208.5,340.4 1209.9,337.3 1211.2,335.5 1212.6,334.9 1213.9,335.5 1215.3,337.3 1216.6,340.4 1218.0,344.6 1219.3,350.0 1220.7,356.6 1222.0,364.3 1223.4,373.2 1224.7,383.1 1226.1,394.0 1227.4,405.9 1228.8,418.7 1230.1,432.5 1231.5,447.1 1232.8,462.4 1234.2,478.5 1235.5,495.2 1236.9,512.5 1238.2,530.4 1239.6,548.7 1240.9,567.3 1242.3,586.3 1243.6,605.5 1245.0,624.8 1246.3,644.2 1247.7,663.7 1249.0,683.0 1250.4,702.2 1251.7,721.2 1253.1,739.8 1254.4,758.1 1255.8,776.0 1257.1,793.3 1258.5,810.0 1259.8,826.1 1261.2,841.4 1262.5,856.0 1263.9,869.8 1265.3,882.6 1266.6,894.5 1268.0,905.4 1269.3,915.3 1270.7,924.2 1272.0,931.9 1273.4,938.5 1274.7,943.9 1276.1,948.1 1277.4,951.2 1278.8,953.0 1280.1,953.6 1281.5,953.0 1282.8,951.2 1284.2,948.1 1285.5,943.9 1286.9,938.5 1288.2,931.9 1289.6,924.2 1290.9,915.3 1292.3,905.4 1293.6,894.5 1295.0,882.6 1296.3,869.8 1297.7,856.0 1299.0,841.4 1300.4,826.1 1301.7,810.0 1303.1,793.3 1304.4,776.0 1305.8,758.1 1307.1,739.8 1308.5,721.2 1309.8,702.2 1311.2,683.0 1312.5,663.7 1313.9,644.3 1315.2,624.8 1316.6,605.5 1317.9,586.3 1319.3,567.3 1320.6,548.7 1322.0,530.4 1323.3,512.5 1324.7,495.2 1326.0,478.5 1327.4,462.4 1328.7,447.1 1330.1,432.5 1331.4,418.7 1332.8,405.9 1334.1,394.0 1335.5,383.1 1336.8,373.2 1338.2,364.3 1339.5,356.6 1340.9,350.0 1342.2,344.6 1343.6,340.4 1344.9,337.3 1346.3,335.5 1347.7,334.9 1349.0,335.5 1350.4,337.3 1351.7,340.4 1353.1,344.6 1354.4,350.0 1355.8,356.6 1357.1,364.3 1358.5,373.2 1359.8,383.1 1361.2,394.0 1362.5,405.9 1363.9,418.7 1365.2,432.5 1366.6,447.1 1367.9,462.4 1369.3,478.5 1370.6,495.2 1372.0,512.5 1373.3,530.4 1374.7,548.7 1376.0,567.3 1377.4,586.3 1378.7,605.5 1380.1,624.8 1381.4,644.3 1382.8,663.7 1384.1,683.0 1385.5,702.2 1386.8,721.2 1388.2,739.8 1389.5,758.1 1390.9,776.0 1392.2,793.3 1393.6,810.0 1394.9,826.1 1396.3,841.4 1397.6,856.0 1399.0,869.8 1400.3,882.6 1401.7,894.5 1403.0,905.4 1404.4,915.3 1405.7,924.2 1407.1,931.9 1408.4,938.5 1409.8,943.9 1411.1,948.1 1412.5,951.2 1413.8,953.0 1415.2,953.6 1416.5,953.0 1417.9,951.2 1419.2,948.1 1420.6,943.9 1421.9,938.5 1423.3,931.9 1424.6,924.2 1426.0,915.3 1427.3,905.4 1428.7,894.5 1430.0,882.6 1431.4,869.8 1432.8,856.0 1434.1,841.4 1435.5,826.1 1436.8,810.0 1438.2,793.3 1439.5,776.0 1440.9,758.1 1442.2,739.8 1443.6,721.2 1444.9,702.2 1446.3,683.0 1447.6,663.7 1449.0,644.3 1450.3,624.8 1451.7,605.5 1453.0,586.3 1454.4,567.3 1455.7,548.7 1457.1,530.4 1458.4,512.5 1459.8,495.2 1461.1,478.5 1462.5,462.4 1463.8,447.1 1465.2,432.5 1466.5,418.7 1467.9,405.9 1469.2,394.0 1470.6,383.1 1471.9,373.2 1473.3,364.3 1474.6,356.6 1476.0,350.0 1477.3,344.6 1478.7,340.4 1480.0,337.3 1481.4,335.5 1482.7,334.9 1484.1,335.5 1485.4,337.3 1486.8,340.4 1488.1,344.6 1489.5,350.0 1490.8,356.6 1492.2,364.3 1493.5,373.2 1494.9,383.1 1496.2,394.0 1497.6,405.9 1498.9,418.7 1500.3,432.5 1501.6,447.1 1503.0,462.4 1504.3,478.5 1505.7,495.2 1507.0,512.5 1508.4,530.4 1509.7,548.7 1511.1,567.3 1512.4,586.3 1513.8,605.5 1515.1,624.8 1516.5,644.3 1517.9,663.7 1519.2,683.0 1520.6,702.2 1521.9,721.2 1523.3,739.8 1524.6,758.1 1526.0,776.0 1527.3,793.3 1528.7,810.0 1530.0,826.1 1531.4,841.4 1532.7,856.0 1534.1,869.8 1535.4,882.6 1536.8,894.5 1538.1,905.4 1539.5,915.3 1540.8,924.2 1542.2,931.9 1543.5,938.5 1544.9,943.9 1546.2,948.1 1547.6,951.2 1548.9,953.0 1550.3,953.6 1551.6,953.0 1553.0,951.2 1554.3,948.1 1555.7,943.9 1557.0,938.5 1558.4,931.9 1559.7,924.2 1561.1,915.3 1562.4,905.4 1563.8,894.5 1565.1,882.6 1566.5,869.8 1567.8,856.0 1569.2,841.4 1570.5,826.1 1571.9,810.0 1573.2,793.3 1574.6,776.0 1575.9,758.1 1577.3,739.8 1578.6,721.2 1580.0,702.2 1581.3,683.0 1582.7,663.7 1584.0,644.3 1585.4,624.8 1586.7,605.5 1588.1,586.3 1589.4,567.3 1590.8,548.7 1592.1,530.4 1593.5,512.5 1594.8,495.2 1596.2,478.5 1597.5,462.4 1598.9,447.1 1600.2,432.5 1601.6,418.7 1603.0,405.9 1604.3,394.0 1605.7,383.1 1607.0,373.2 1608.4,364.3 1609.7,356.6 1611.1,350.0 1612.4,344.6 1613.8,340.4 1615.1,337.3 1616.5,335.5 1617.8,334.9 1619.2,335.5 1620.5,337.3 1621.9,340.4 1623.2,344.6 1624.6,350.0 1625.9,356.6 1627.3,364.3 1628.6,373.2 1630.0,383.1 1631.3,394.0 1632.7,405.9 1634.0,418.7 1635.4,432.5 1636.7,447.1 1638.1,462.4 1639.4,478.5 1640.8,495.2 1642.1,512.5 1643.5,530.4 1644.8,548.7 1646.2,567.3 1647.5,586.3 1648.9,605.5 1650.2,624.8 1651.6,644.2 1652.9,663.7 1654.3,683.0 1655.6,702.2 1657.0,721.2 1658.3,739.8 1659.7,758.1 1661.0,776.0 1662.4,793.3 1663.7,810.0 1665.1,826.1 1666.4,841.4 1667.8,856.0 1669.1,869.8 1670.5,882.6 1671.8,894.5 1673.2,905.4 1674.5,915.3 1675.9,924.2 1677.2,931.9 1678.6,938.5 1679.9,943.9 1681.3,948.1 1682.6,951.2 1684.0,953.0 1685.4,953.6 1686.7,953.0 1688.1,951.2 1689.4,948.1 1690.8,943.9 1692.1,938.5 1693.5,931.9 1694.8,924.2 1696.2,915.3 1697.5,905.4 1698.9,894.5 1700.2,882.6 1701.6,869.8 1702.9,856.0 1704.3,841.4 1705.6,826.1 1707.0,810.0 1708.3,793.3 1709.7,776.0 1711.0,758.1 1712.4,739.8 1713.7,721.2 1715.1,702.2 1716.4,683.0 1717.8,663.7 1719.1,644.3 1720.5,624.8 1721.8,605.5 1723.2,586.3 1724.5,567.3 1725.9,548.7 1727.2,530.4 1728.6,512.5 1729.9,495.2 1731.3,478.5 1732.6,462.4 1734.0,447.1 1735.3,432.5 1736.7,418.7 1738.0,405.9 1739.4,394.0 1740.7,383.1 1742.1,373.2 1743.4,364.3 1744.8,356.6 1746.1,350.0 1747.5,344.6 1748.8,340.4 1750.2,337.3 1751.5,335.5 1752.9,334.9 1754.2,335.5 1755.6,337.3 1756.9,340.4 1758.3,344.6 1759.6,350.0 1761.0,356.6 1762.3,364.3 1763.7,373.2 1765.0,383.1 1766.4,394.0 1767.7,405.9 1769.1,418.7 1770.5,432.5 1771.8,447.1 1773.2,462.4 1774.5,478.5 1775.9,495.2 1777.2,512.5 1778.6,530.4 1779.9,548.7 1781.3,567.3 1782.6,586.3 1784.0,605.5 1785.3,624.8 1786.7,644.2 1788.0,663.7 1789.4,683.0 1790.7,702.2 1792.1,721.2 1793.4,739.8 1794.8,758.1 1796.1,776.0 1797.5,793.3 1798.8,810.0 1800.2,826.1 1801.5,841.4 1802.9,856.0 1804.2,869.8 1805.6,882.6 1806.9,894.5 1808.3,905.4 1809.6,915.3 1811.0,924.2 1812.3,931.9 1813.7,938.5 1815.0,943.9 1816.4,948.1 1817.7,951.2 1819.1,953.0 1820.4,953.6 1821.8,953.0 1823.1,951.2 1824.5,948.1 1825.8,943.9 1827.2,938.5 1828.5,931.9 1829.9,924.2 1831.2,915.3 1832.6,905.4 1833.9,894.5 1835.3,882.6 1836.6,869.8 1838.0,856.0 1839.3,841.4 1840.7,826.1 1842.0,810.0 1843.4,793.3 1844.7,776.0 1846.1,758.1 1847.4,739.8 1848.8,721.2 1850.1,702.2 1851.5,683.0 1852.8,663.7"/>
<path fill="none" stroke="#1f77b4" stroke-width="6" stroke-linecap="round" d="M503.4 644.2h0M504.8 624.8h0M506.1 605.5h0M507.5 586.3h0M508.8 567.3h0M510.2 548.7h0M511.5 530.4h0M512.9 512.5h0M514.2 495.2h0M515.6 478.5h0M516.9 462.4h0M518.3 447.1h0M519.6 432.5h0M521.0 418.7h0M522.3 405.9h0M523.7 394.0h0M525.0 383.1h0M526.4 373.2h0M527.7 364.3h0M529.1 356.6h0M530.4 350.0h0M531.8 344.6h0M533.1 340.4h0M534.5 337.3h0M535.8 335.5h0M537.2 334.9h0M538.5 335.5h0M539.9 337.3h0M541.2 340.4h0M542.6 344.6h0M543.9 350.0h0M545.3 356.6h0M546.6 364.3h0M548.0 373.2h0M549.3 383.1h0M550.7 394.0h0M552.0 405.9h0M553.4 418.7h0M554.7 432.5h0M556.1 447.1h0M557.4 462.4h0M558.8 478.5h0M560.1 495.2h0M561.5 512.5h0M562.8 530.4h0M564.2 548.7h0M565.5 567.3h0M566.9 586.3h0M568.2 605.5h0M569.6 624.8h0M570.9 644.2h0M572.3 663.7h0M573.6 683.0h0M575.0 702.2h0M576.3 721.2h0M577.7 739.8h0M579.0 758.1h0M580.4 776.0h0M581.7 793.3h0M583.1 810.0h0M584.4 826.1h0M585.8 841.4h0M587.1 856.0h0M588.5 869.8h0M589.9 882.6h0M591.2 894.5h0M592.6 905.4h0M593.9 915.3h0M595.3 924.2h0M596.6 931.9h0M598.0 938.5h0M599.3 943.9h0M600.7 948.1h0M602.0 951.2h0M603.4 953.0h0M604.7 953.6h0M606.1 953.0h0M607.4 951.2h0M608.8 948.1h0M610.1 943.9h0M611.5 938.5h0M612.8 931.9h0M614.2 924.2h0M615.5 915.3h0M616.9 905.4h0M618.2 894.5h0M619.6 882.6h0M620.9 869.8h0M622.3 856.0h0M623.6 841.4h0M625.0 826.1h0M626.3 810.0h0M627.7 793.3h0M629.0 776.0h0M630.4 758.1h0M631.7 739.8h0M633.1 721.2h0M634.4 702.2h0M635.8 683.0h0M637.1 663.7h0M638.5 644.3h0M639.8 624.8h0M641.2 605.5h0M642.5 586.3h0M643.9 567.3h0M645.2 548.7h0M646.6 530.4h0M647.9 512.5h0M649.3 495.2h0M650.6 478.5h0M652.0 462.4h0M653.3 447.1h0M654.7 432.5h0M656.0 418.7h0M657.4 405.9h0M658.7 394.0h0M660.1 383.1h0M661.4 373.2h0M662.8 364.3h0M664.1 356.6h0M665.5 350.0h0M666.8 344.6h0M668.2 340.4h0M669.5 337.3h0M670.9 335.5h0M672.2 334.9h0M673.6 335.5h0M675.0 337.3h0M676.3 340.4h0M677.7 344.6h0M679.0 350.0h0M680.4 356.6h0M681.7 364.3h0M683.1 373.2h0M684.4 383.1h0M685.8 394.0h0M687.1 405.9h0M688.5 418.7h0M689.8 432.5h0M691.2 447.1h0M692.5 462.4h0M693.9 478.5h0M695.2 495.2h0M696.6 512.5h0M697.9 530.4h0M699.3 548.7h0M700.6 567.3h0M702.0 586.3h0M703.3 605.5h0M704.7 624.8h0M706.0 644.2h0M707.4 663.7h0M708.7 683.0h0M710.1 702.2h0M711.4 721.2h0M712.8 739.8h0M714.1 758.1h0M715.5 776.0h0M716.8 793.3h0M718.2 810.0h0M719.5 826.1h0M720.9 841.4h0M722.2 856.0h0M723.6 869.8h0M724.9 882.6h0M726.3 894.5h0M727.6 905.4h0M729.0 915.3h0M730.3 924.2h0M731.7 931.9h0M733.0 938.5h0M734.4 943.9h0M735.7 948.1h0M737.1 951.2h0M738.4 953.0h0M739.8 953.6h0M741.1 953.0h0M742.5 951.2h0M743.8 948.1h0M745.2 943.9h0M746.5 938.5h0M747.9 931.9h0M749.2 924.2h0M750.6 915.3h0M751.9 905.4h0M753.3 894.5h0M754.6 882.6h0M756.0 869.8h0M757.4 856.0h0M758.7 841.4h0M760.1 826.1h0M761.4 810.0h0M762.8 793.3h0M764.1 776.0h0M765.5 758.1h0M766.8 739.8h0M768.2 721.2h0M769.5 702.2h0M770.9 683.0h0M772.2 663.7h0M773.6 644.3h0M774.9 624.8h0M776.3 605.5h0M777.6 586.3h0M779.0 567.3h0M780.3 548.7h0M781.7 530.4h0M783.0 512.5h0M784.4 495.2h0M785.7 478.5h0M787.1 462.4h0M788.4 447.1h0M789.8 432.5h0M791.1 418.7h0M792.5 405.9h0M793.8 394.0h0M795.2 383.1h0M796.5 373.2h0M797.9 364.3h0M799.2 356.6h0M800.6 350.0h0M801.9 344.6h0M803.3 340.4h0M804.6 337.3h0M806.0 335.5h0M807.3 334.9h0M808.7 335.5h0M810.0 337.3h0M811.4 340.4h0M812.7 344.6h0M814.1 350.0h0M815.4 356.6h0M816.8 364.3h0M818.1 373.2h0M819.5 383.1h0M820.8 394.0h0M822.2 405.9h0M823.5 418.7h0M824.9 432.5h0M826.2 447.1h0M827.6 462.4h0M828.9 478.5h0M830.3 495.2h0M831.6 512.5h0M833.0 530.4h0M834.3 548.7h0M835.7 567.3h0M837.0 586.3h0M838.4 605.5h0M839.7 624.8h0M841.1 644.2h0M842.5 663.7h0M843.8 683.0h0M845.2 702.2h0M846.5 721.2h0M847.9 739.8h0M849.2 758.1h0M850.6 776.0h0M851.9 793.3h0M853.3 810.0h0M854.6 826.1h0M856.0 841.4h0M857.3 856.0h0M858.7 869.8h0M860.0 882.6h0M861.4 894.5h0M862.7 905.4h0M864.1 915.3h0M865.4 924.2h0M866.8 931.9h0M868.1 938.5h0M869.5 943.9h0M870.8 948.1h0M872.2 951.2h0M873.5 953.0h0M874.9 953.6h0M876.2 953.0h0M877.6 951.2h0M878.9 948.1h0M880.3 943.9h0M881.6 938.5h0M883.0 931.9h0M884.3 924.2h0M885.7 915.3h0M887.0 905.4h0M888.4 894.5h0M889.7 882.6h0M891.1 869.8h0M892.4 856.0h0M893.8 841.4h0M895.1 826.1h0M896.5 810.0h0M897.8 793.3h0M899.2 776.0h0M900.5 758.1h0M901.9 739.8h0M903.2 721.2h0M904.6 702.2h0M905.9 683.0h0M907.3 663.7h0M908.6 644.3h0M910.0 624.8h0M911.3 605.5h0M912.7 586.3h0M914.0 567.3h0M915.4 548.7h0M916.7 530.4h0M918.1 512.5h0M919.4 495.2h0M920.8 478.5h0M922.1 462.4h0M923.5 447.1h0M924.8 432.5h0M926.2 418.7h0M927.6 405.9h0M928.9 394.0h0M930.3 383.1h0M931.6 373.2h0M933.0 364.3h0M934.3 356.6h0M935.7 350.0h0M937.0 344.6h0M938.4 340.4h0M939.7 337.3h0M941.1 335.5h0M942.4 334.9h0M943.8 335.5h0M945.1 337.3h0M946.5 340.4h0M947.8 344.6h0M949.2 350.0h0M950.5 356.6h0M951.9 364.3h0M953.2 373.2h0M954.6 383.1h0M955.9 394.0h0M957.3 405.9h0M958.6 418.7h0M960.0 432.5h0M961.3 447.1h0M962.7 462.4h0M964.0 478.5h0M965.4 495.2h0M966.7 512.5h0M968.1 530.4h0M969.4 548.7h0M970.8 567.3h0M972.1 586.3h0M973.5 605.5h0M974.8 624.8h0M976.2 644.2h0M977.5 663.7h0M978.9 683.0h0M980.2 702.2h0M981.6 721.2h0M982.9 739.8h0M984.3 758.1h0M985.6 776.0h0M987.0 793.3h0M988.3 810.0h0M989.7 826.1h0M991.0 841.4h0M992.4 856.0h0M993.7 869.8h0M995.1 882.6h0M996.4 894.5h0M997.8 905.4h0M999.1 915.3h0M1000.5 924.2h0M1001.8 931.9h0M1003.2 938.5h0M1004.5 943.9h0M1005.9 948.1h0M1007.2 951.2h0M1008.6 953.0h0M1010.0 953.6h0M1011.3 953.0h0M1012.7 951.2h0M1014.0 948.1h0M1015.4 943.9h0M1016.7 938.5h0M1018.1 931.9h0M1019.4 924.2h0M1020.8 915.3h0M1022.1 905.4h0M1023.5 894.5h0M1024.8 882.6h0M1026.2 869.8h0M1027.5 856.0h0M1028.9 841.4h0M1030.2 826.1h0M1031.6 810.0h0M1032.9 793.3h0M1034.3 776.0h0M1035.6 758.1h0M1037.0 739.8h0M1038.3 721.2h0M1039.7 702.2h0M1041.0 683.0h0M1042.4 663.7h0M1043.7 644.3h0M1045.1 624.8h0M1046.4 605.5h0M1047.8 586.3h0M1049.1 567.3h0M1050.5 548.7h0M1051.8 530.4h0M1053.2 512.5h0M1054.5 495.2h0M1055.9 478.5h0M1057.2 462.4h0M1058.6 447.1h0M1059.9 432.5h0M1061.3 418.7h0M1062.6 405.9h0M1064.0 394.0h0M1065.3 383.1h0M1066.7 373.2h0M1068.0 364.3h0M1069.4 356.6h0M1070.7 350.0h0M1072.1 344.6h0M1073.4 340.4h0M1074.8 337.3h0M1076.1 335.5h0M1077.5 334.9h0M1078.8 335.5h0M1080.2 337.3h0M1081.5 340.4h0M1082.9 344.6h0M1084.2 350.0h0M1085.6 356.6h0M1086.9 364.3h0M1088.3 373.2h0M1089.6 383.1h0M1091.0 394.0h0M1092.3 405.9h0M1093.7 418.7h0M1095.1 432.5h0M1096.4 447.1h0M1097.8 462.4h0M1099.1 478.5h0M1100.5 495.2h0M1101.8 512.5h0M1103.2 530.4h0M1104.5 548.7h0M1105.9 567.3h0M1107.2 586.3h0M1108.6 605.5h0M1109.9 624.8h0M1111.3 644.2h0M1112.6 663.7h0M1114.0 683.0h0M1115.3 702.2h0M1116.7 721.2h0M1118.0 739.8h0M1119.4 758.1h0M1120.7 776.0h0M1122.1 793.3h0M1123.4 810.0h0M1124.8 826.1h0M1126.1 841.4h0M1127.5 856.0h0M1128.8 869.8h0M1130.2 882.6h0M1131.5 894.5h0M1132.9 905.4h0M1134.2 915.3h0M1135.6 924.2h0M1136.9 931.9h0M1138.3 938.5h0M1139.6 943.9h0M1141.0 948.1h0M1142.3 951.2h0M1143.7 953.0h0M1145.0 953.6h0M1146.4 953.0h0M1147.7 951.2h0M1149.1 948.1h0M1150.4 943.9h0M1151.8 938.5h0M1153.1 931.9h0M1154.5 924.2h0M1155.8 915.3h0M1157.2 905.4h0M1158.5 894.5h0M1159.9 882.6h0M1161.2 869.8h0M1162.6 856.0h0M1163.9 841.4h0M1165.3 826.1h0M1166.6 810.0h0M1168.0 793.3h0M1169.3 776.0h0M1170.7 758.1h0M1172.0 739.8h0M1173.4 721.2h0M1174.7 702.2h0M1176.1 683.0h0M1177.4 663.7h0M1178.8 644.3h0M1180.2 624.8h0M1181.5 605.5h0M1182.9 586.3h0M1184.2 567.3h0M1185.6 548.7h0M1186.9 530.4h0M1188.3 512.5h0M1189.6 495.2h0M1191.0 478.5h0M1192.3 462.4h0M1193.7 447.1h0M1195.0 432.5h0M1196.4 418.7h0M1197.7 405.9h0M1199.1 394.0h0M1200.4 383.1h0M1201.8 373.2h0M1203.1 364.3h0M1204.5 356.6h0M1205.8 350.0h0M1207.2 344.6h0M1208.5 340.4h0M1209.9 337.3h0M1211.2 335.5h0M1212.6 334.9h0M1213.9 335.5h0M1215.3 337.3h0M1216.6 340.4h0M1218.0 344.6h0M1219.3 350.0h0M1220.7 356.6h0M1222.0 364.3h0M1223.4 373.2h0M1224.7 383.1h0M1226.1 394.0h0M1227.4 405.9h0M1228.8 418.7h0M1230.1 432.5h0M1231.5 447.1h0M1232.8 462.4h0M1234.2 478.5h0M1235.5 495.2h0M1236.9 512.5h0M1238.2 530.4h0M1239.6 548.7h0M1240.9 567.3h0M1242.3 586.3h0M1243.6 605.5h0M1245.0 624.8h0M1246.3 644.2h0M1247.7 663.7h0M1249.0 683.0h0M1250.4 702.2h0M1251.7 721.2h0M1253.1 739.8h0M1254.4 758.1h0M1255.8 776.0h0M1257.1 793.3h0M1258.5 810.0h0M1259.8 826.1h0M1261.2 841.4h0M1262.5 856.0h0M1263.9 869.8h0M1265.3 882.6h0M1266.6 894.5h0M1268.0 905.4h0M1269.3 915.3h0M1270.7 924.2h0M1272.0 931.9h0M1273.4 938.5h0M1274.7 943.9h0M1276.1 948.1h0M1277.4 951.2h0M1278.8 953.0h0M1280.1 953.6h0M1281.5 953.0h0M1282.8 951.2h0M1284.2 948.1h0M1285.5 943.9h0M1286.9 938.5h0M1288.2 931.9h0M1289.6 924.2h0M1290.9 915.3h0M1292.3 905.4h0M1293.6 894.5h0M1295.0 882.6h0M1296.3 869.8h0M1297.7 856.0h0M1299.0 841.4h0M1300.4 826.1h0M1301.7 810.0h0M1303.1 793.3h0M1304.4 776.0h0M1305.8 758.1h0M1307.1 739.8h0M1308.5 721.2h0M1309.8 702.2h0M1311.2 683.0h0M1312.5 663.7h0M1313.9 644.3h0M1315.2 624.8h0M1316.6 605.5h0M1317.9 586.3h0M1319.3 567.3h0M1320.6 548.7h0M1322.0 530.4h0M1323.3 512.5h0M1324.7 495.2h0M1326.0 478.5h0M1327.4 462.4h0M1328.7 447.1h0M1330.1 432.5h0M1331.4 418.7h0M1332.8 405.9h0M1334.1 394.0h0M1335.5 383.1h0M1336.8 373.2h0M1338.2 364.3h0M1339.5 356.6h0M1340.9 350.0h0M1342.2 344.6h0M1343.6 340.4h0M1344.9 337.3h0M1346.3 335.5h0M1347.7 334.9h0M1349.0 335.5h0M1350.4 337.3h0M1351.7 340.4h0M1353.1 344.6h0M1354.4 350.0h0M1355.8 356.6h0M1357.1 364.3h0M1358.5 373.2h0M1359.8 383.1h0M1361.2 394.0h0M1362.5 405.9h0M1363.9 418.7h0M1365.2 432.5h0M1366.6 447.1h0M1367.9 462.4h0M1369.3 478.5h0M1370.6 495.2h0M1372.0 512.5h0M1373.3 530.4h0M1374.7 548.7h0M1376.0 567.3h0M1377.4 586.3h0M1378.7 605.5h0M1380.1 624.8h0M1381.4 644.3h0M1382.8 663.7h0M1384.1 683.0h0M1385.5 702.2h0M1386.8 721.2h0M1388.2 739.8h0M1389.5 758.1h0M1390.9 776.0h0M1392.2 793.3h0M1393.6 810.0h0M1394.9 826.1h0M1396.3 841.4h0M1397.6 856.0h0M1399.0 869.8h0M1400.3 882.6h0M1401.7 894.5h0M1403.0 905.4h0M1404.4 915.3h0M1405.7 924.2h0M1407.1 931.9h0M1408.4 938.5h0M1409.8 943.9h0M1411.1 948.1h0M1412.5 951.2h0M1413.8 953.0h0M1415.2 953.6h0M1416.5 953.0h0M1417.9 951.2h0M1419.2 948.1h0M1420.6 943.9h0M1421.9 938.5h0M1423.3 931.9h0M1424.6 924.2h0M1426.0 915.3h0M1427.3 905.4h0M1428.7 894.5h0M1430.0 882.6h0M1431.4 869.8h0M1432.8 856.0h0M1434.1 841.4h0M1435.5 826.1h0M1436.8 810.0h0M1438.2 793.3h0M1439.5 776.0h0M1440.9 758.1h0M1442.2 739.8h0M1443.6 721.2h0M1444.9 702.2h0M1446.3 683.0h0M1447.6 663.7h0M1449.0 644.3h0M1450.3 624.8h0M1451.7 605.5h0M1453.0 586.3h0M1454.4 567.3h0M1455.7 548.7h0M1457.1 530.4h0M1458.4 512.5h0M1459.8 495.2h0M1461.1 478.5h0M1462.5 462.4h0M1463.8 447.1h0M1465.2 432.5h0M1466.5 418.7h0M1467.9 405.9h0M1469.2 394.0h0M1470.6 383.1h0M1471.9 373.2h0M1473.3 364.3h0M1474.6 356.6h0M1476.0 350.0h0M1477.3 344.6h0M1478.7 340.4h0M1480.0 337.3h0M1481.4 335.5h0M1482.7 334.9h0M1484.1 335.5h0M1485.4 337.3h0M1486.8 340.4h0M1488.1 344.6h0M1489.5 350.0h0M1490.8 356.6h0M1492.2 364.3h0M1493.5 373.2h0M1494.9 383.1h0M1496.2 394.0h0M1497.6 405.9h0M1498.9 418.7h0M1500.3 432.5h0M1501.6 447.1h0M1503.0 462.4h0M1504.3 478.5h0M1505.7 495.2h0M1507.0 512.5h0M1508.4 530.4h0M1509.7 548.7h0M1511.1 567.3h0M1512.4 586.3h0M1513.8 605.5h0M1515.1 624.8h0M1516.5 644.3h0M1517.9 663.7h0M1519.2 683.0h0M1520.6 702.2h0M1521.9 721.2h0M1523.3 739.8h0M1524.6 758.1h0M1526.0 776.0h0M1527.3 793.3h0M1528.7 810.0h0M1530.0 826.1h0M1531.4 841.4h0M1532.7 856.0h0M1534.1 869.8h0M1535.4 882.6h0M1536.8 894.5h0M1538.1 905.4h0M1539.5 915.3h0M1540.8 924.2h0M1542.2 931.9h0M1543.5 938.5h0M1544.9 943.9h0M1546.2 948.1h0M1547.6 951.2h0M1548.9 953.0h0M1550.3 953.6h0M1551.6 953.0h0M1553.0 951.2h0M1554.3 948.1h0M1555.7 943.9h0M1557.0 938.5h0M1558.4 931.9h0M1559.7 924.2h0M1561.1 915.3h0M1562.4 905.4h0M1563.8 894.5h0M1565.1 882.6h0M1566.5 869.8h0M1567.8 856.0h0M1569.2 841.4h0M1570.5 826.1h0M1571.9 810.0h0M1573.2 793.3h0M1574.6 776.0h0M1575.9 758.1h0M1577.3 739.8h0M1578.6 721.2h0M1580.0 702.2h0M1581.3 683.0h0M1582.7 663.7h0M1584.0 644.3h0M1585.4 624.8h0M1586.7 605.5h0M1588.1 586.3h0M1589.4 567.3h0M1590.8 548.7h0M1592.1 530.4h0M1593.5 512.5h0M1594.8 495.2h0M1596.2 478.5h0M1597.5 462.4h0M1598.9 447.1h0M1600.2 432.5h0M1601.6 418.7h0M1603.0 405.9h0M1604.3 394.0h0M1605.7 383.1h0M1607.0 373.2h0M1608.4 364.3h0M1609.7 356.6h0M1611.1 350.0h0M1612.4 344.6h0M1613.8 340.4h0M1615.1 337.3h0M1616.5 335.5h0M1617.8 334.9h0M1619.2 335.5h0M1620.5 337.3h0M1621.9 340.4h0M1623.2 344.6h0M1624.6 350.0h0M1625.9 356.6h0M1627.3 364.3h0M1628.6 373.2h0M1630.0 383.1h0M1631.3 394.0h0M1632.7 405.9h0M1634.0 418.7h0M1635.4 432.5h0M1636.7 447.1h0M1638.1 462.4h0M1639.4 478.5h0M1640.8 495.2h0M1642.1 512.5h0M1643.5 530.4h0M1644.8 548.7h0M1646.2 567.3h0M1647.5 586.3h0M1648.9 605.5h0M1650.2 624.8h0M1651.6 644.2h0M1652.9 663.7h0M1654.3 683.0h0M1655.6 702.2h0M1657.0 721.2h0M1658.3 739.8h0M1659.7 758.1h0M1661.0 776.0h0M1662.4 793.3h0M1663.7 810.0h0M1665.1 826.1h0M1666.4 841.4h0M1667.8 856.0h0M1669.1 869.8h0M1670.5 882.6h0M1671.8 894.5h0M1673.2 905.4h0M1674.5 915.3h0M1675.9 924.2h0M1677.2 931.9h0M1678.6 938.5h0M1679.9 943.9h0M1681.3 948.1h0M1682.6 951.2h0M1684.0 953.0h0M1685.4 953.6h0M1686.7 953.0h0M1688.1 951.2h0M1689.4 948.1h0M1690.8 943.9h0M1692.1 938.5h0M1693.5 931.9h0M1694.8 924.2h0M1696.2 915.3h0M1697.5 905.4h0M1698.9 894.5h0M1700.2 882.6h0M1701.6 869.8h0M1702.9 856.0h0M1704.3 841.4h0M1705.6 826.1h0M1707.0 810.0h0M1708.3 793.3h0M1709.7 776.0h0M1711.0 758.1h0M1712.4 739.8h0M1713.7 721.2h0M1715.1 702.2h0M1716.4 683.0h0M1717.8 663.7h0M1719.1 644.3h0M1720.5 624.8h0M1721.8 605.5h0M1723.2 586.3h0M1724.5 567.3h0M1725.9 548.7h0M1727.2 530.4h0M1728.6 512.5h0M1729.9 495.2h0M1731.3 478.5h0M1732.6 462.4h0M1734.0 447.1h0M1735.3 432.5h0M1736.7 418.7h0M1738.0 405.9h0M1739.4 394.0h0M1740.7 383.1h0M1742.1 373.2h0M1743.4 364.3h0M1744.8 356.6h0M1746.1 350.0h0M1747.5 344.6h0M1748.8 340.4h0M1750.2 337.3h0M1751.5 335.5h0M1752.9 334.9h0M1754.2 335.5h0M1755.6 337.3h0M1756.9 340.4h0M1758.3 344.6h0M1759.6 350.0h0M1761.0 356.6h0M1762.3 364.3h0M1763.7 373.2h0M1765.0 383.1h0M1766.4 394.0h0M1767.7 405.9h0M1769.1 418.7h0M1770.5 432.5h0M1771.8 447.1h0M1773.2 462.4h0M1774.5 478.5h0M1775.9 495.2h0M1777.2 512.5h0M1778.6 530.4h0M1779.9 548.7h0M1781.3 567.3h0M1782.6 586.3h0M1784.0 605.5h0M1785.3 624.8h0M1786.7 644.2h0M1788.0 663.7h0M1789.4 683.0h0M1790.7 702.2h0M1792.1 721.2h0M1793.4 739.8h0M1794.8 758.1h0M1796.1 776.0h0M1797.5 793.3h0M1798.8 810.0h0M1800.2 826.1h0M1801.5 841.4h0M1802.9 856.0h0M1804.2 869.8h0M1805.6 882.6h0M1806.9 894.5h0M1808.3 905.4h0M1809.6 915.3h0M1811.0 924.2h0M1812.3 931.9h0M1813.7 938.5h0M1815.0 943.9h0M1816.4 948.1h0M1817.7 951.2h0M1819.1 953.0h0M1820.4 953.6h0M1821.8 953.0h0M1823.1 951.2h0M1824.5 948.1h0M1825.8 943.9h0M1827.2 938.5h0M1828.5 931.9h0M1829.9 924.2h0M1831.2 915.3h0M1832.6 905.4h0M1833.9 894.5h0M1835.3 882.6h0M1836.6 869.8h0M1838.0 856.0h0M1839.3 841.4h0M1840.7 826.1h0M1842.0 810.0h0M1843.4 793.3h0M1844.7 776.0h0M1846.1 758.1h0M1847.4 739.8h0M1848.8 721.2h0M1850.1 702.2h0M1851.5 683.0h0M1852.8 663.7h0"/>
<path fill="none" stroke="#ff7f0e" stroke-opacity="0.72" stroke-width="1.2" d="M495.0 635.9l16.8 16.8m0 -16.8l-16.8 16.8M497.7 597.1l16.8 16.8m0 -16.8l-16.8 16.8M500.4 558.9l16.8 16.8m0 -16.8l-16.8 16.8M503.1 522.0l16.8 16.8m0 -16.8l-16.8 16.8M505.8 486.8l16.8 16.8m0 -16.8l-16.8 16.8M508.5 454.0l16.8 16.8m0 -16.8l-16.8 16.8M511.2 424.1l16.8 16.8m0 -16.8l-16.8 16.8M513.9 397.5l16.8 16.8m0 -16.8l-16.8 16.8M516.6 374.7l16.8 16.8m0 -16.8l-16.8 16.8M519.3 355.9l16.8 16.8m0 -16.8l-16.8 16.8M522.0 341.6l16.8 16.8m0 -16.8l-16.8 16.8M524.7 332.0l16.8 16.8m0 -16.8l-16.8 16.8M527.4 327.1l16.8 16.8m0 -16.8l-16.8 16.8M530.1 327.1l16.8 16.8m0 -16.8l-16.8 16.8M532.8 332.0l16.8 16.8m0 -16.8l-16.8 16.8M535.5 341.6l16.8 16.8m0 -16.8l-16.8 16.8M538.2 355.9l16.8 16.8m0 -16.8l-16.8 16.8M540.9 374.7l16.8 16.8m0 -16.8l-16.8 16.8M543.6 397.5l16.8 16.8m0 -16.8l-16.8 16.8M546.3 424.1l16.8 16.8m0 -16.8l-16.8 16.8M549.0 454.0l16.8 16.8m0 -16.8l-16.8 16.8M551.7 486.8l16.8 16.8m0 -16.8l-16.8 16.8M554.4 522.0l16.8 16.8m0 -16.8l-16.8 16.8M557.1 558.9l16.8 16.8m0 -16.8l-16.8 16.8M559.8 597.1l16.8 16.8m0 -16.8l-16.8 16.8M562.5 635.9l16.8 16.8m0 -16.8l-16.8 16.8M565.2 674.6l16.8 16.8m0 -16.8l-16.8 16.8M567.9 712.8l16.8 16.8m0 -16.8l-16.8 16.8M570.6 749.7l16.8 16.8m0 -16.8l-16.8 16.8M573.3 784.9l16.8 16.8m0 -16.8l-16.8 16.8M576.0 817.7l16.8 16.8m0 -16.8l-16.8 16.8M578.7 847.6l16.8 16.8m0 -16.8l-16.8 16.8M581.5 874.2l16.8 16.8m0 -16.8l-16.8 16.8M584.2 897.0l16.8 16.8m0 -16.8l-16.8 16.8M586.9 915.8l16.8 16.8m0 -16.8l-16.8 16.8M589.6 930.1l16.8 16.8m0 -16.8l-16.8 16.8M592.3 939.7l16.8 16.8m0 -16.8l-16.8 16.8M595.0 944.6l16.8 16.8m0 -16.8l-16.8 16.8M597.7 944.6l16.8 16.8m0 -16.8l-16.8 16.8M600.4 939.7l16.8 16.8m0 -16.8l-16.8 16.8M603.1 930.1l16.8 16.8m0 -16.8l-16.8 16.8M605.8 915.8l16.8 16.8m0 -16.8l-16.8 16.8M608.5 897.0l16.8 16.8m0 -16.8l-16.8 16.8M611.2 874.2l16.8 16.8m0 -16.8l-16.8 16.8M613.9 847.6l16.8 16.8m0 -16.8l-16.8 16.8M616.6 817.7l16.8 16.8m0 -16.8l-16.8 16.8M619.3 784.9l16.8 16.8m0 -16.8l-16.8 16.8M622.0 749.7l16.8 16.8m0 -16.8l-16.8 16.8M624.7 712.8l16.8 16.8m0 -16.8l-16.8 16.8M627.4 674.6l16.8 16.8m0 -16.8l-16.8 16.8M630.1 635.9l16.8 16.8m0 -16.8l-16.8 16.8M632.8 597.1l16.8 16.8m0 -16.8l-16.8 16.8M635.5 558.9l16.8 16.8m0 -16.8l-16.8 16.8M638.2 522.0l16.8 16.8m0 -16.8l-16.8 16.8M640.9 486.8l16.8 16.8m0 -16.8l-16.8 16.8M643.6 454.0l16.8 16.8m0 -16.8l-16.8 16.8M646.3 424.1l16.8 16.8m0 -16.8l-16.8 16.8M649.0 397.5l16.8 16.8m0 -16.8l-16.8 16.8M651.7 374.7l16.8 16.8m0 -16.8l-16.8 16.8M654.4 355.9l16.8 16.8m0 -16.8l-16.8 16.8M657.1 341.6l16.8 16.8m0 -16.8l-16.8 16.8M659.8 332.0l16.8 16.8m0 -16.8l-16.8 16.8M662.5 327.1l16.8 16.8m0 -16.8l-16.8 16.8M665.2 327.1l16.8 16.8m0 -16.8l-16.8 16.8M667.9 332.0l16.8 16.8m0 -16.8l-16.8 16.8M670.6 341.6l16.8 16.8m0 -16.8l-16.8 16.8M673.3 355.9l16.8 16.8m0 -16.8l-16.8 16.8M676.0 374.7l16.8 16.8m0 -16.8l-16.8 16.8M678.7 397.5l16.8 16.8m0 -16.8l-16.8 16.8M681.4 424.1l16.8 16.8m0 -16.8l-16.8 16.8M684.1 454.0l16.8 16.8m0 -16.8l-16.8 16.8M686.8 486.8l16.8 16.8m0 -16.8l-16.8 16.8M689.5 522.0l16.8 16.8m0 -16.8l-16.8 16.8M692.2 558.9l16.8 16.8m0 -16.8l-16.8 16.8M694.9 597.1l16.8 16.8m0 -16.8l-16.8 16.8M697.6 635.8l16.8 16.8m0 -16.8l-16.8 16.8M700.3 674.6l16.8 16.8m0 -16.8l-16.8 16.8M703.0 712.8l16.8 16.8m0 -16.8l-16.8 16.8M705.7 749.7l16.8 16.8m0 -16.8l-16.8 16.8M708.4 784.9l16.8 16.8m0 -16.8l-16.8 16.8M711.1 817.7l16.8 16.8m0 -16.8l-16.8 16.8M713.8 847.6l16.8 16.8m0 -16.8l-16.8 16.8M716.5 874.2l16.8 16.8m0 -16.8l-16.8 16.8M719.2 897.0l16.8 16.8m0 -16.8l-16.8 16.8M721.9 915.8l16.8 16.8m0 -16.8l-16.8 16.8M724.6 930.1l16.8 16.8m0 -16.8l-16.8 16.8M727.3 939.7l16.8 16.8m0 -16.8l-16.8 16.8M730.0 944.6l16.8 16.8m0 -16.8l-16.8 16.8M732.7 944.6l16.8 16.8m0 -16.8l-16.8 16.8M735.4 939.7l16.8 16.8m0 -16.8l-16.8 16.8M738.1 930.1l16.8 16.8m0 -16.8l-16.8 16.8M740.8 915.8l16.8 16.8m0 -16.8l-16.8 16.8M743.5 897.0l16.8 16.8m0 -16.8l-16.8 16.8M746.2 874.2l16.8 16.8m0 -16.8l-16.8 16.8M749.0 847.6l16.8 16.8m0 -16.8l-16.8 16.8M751.7 817.7l16.8 16.8m0 -16.8l-16.8 16.8M754.4 784.9l16.8 16.8m0 -16.8l-16.8 16.8M757.1 749.7l16.8 16.8m0 -16.8l-16.8 16.8M759.8 712.8l16.8 16.8m0 -16.8l-16.8 16.8M762.5 674.6l16.8 16.8m0 -16.8l-16.8 16.8M765.2 635.9l16.8 16.8m0 -16.8l-16.8 16.8M767.9 597.1l16.8 16.8m0 -16.8l-16.8 16.8M770.6 558.9l16.8 16.8m0 -16.8l-16.8 16.8M773.3 522.0l16.8 16.8m0 -16.8l-16.8 16.8M776.0 486.8l16.8 16.8m0 -16.8l-16.8 16.8M778.7 454.0l16.8 16.8m0 -16.8l-16.8 16.8M781.4 424.1l16.8 16.8m0 -16.8l-16.8 16.8M784.1 397.5l16.8 16.8m0 -16.8l-16.8 16.8M786.8 374.7l16.8 16.8m0 -16.8l-16.8 16.8M789.5 355.9l16.8 16.8m0 -16.8l-16.8 16.8M792.2 341.6l16.8 16.8m0 -16.8l-16.8 16.8M794.9 332.0l16.8 16.8m0 -16.8l-16.8 16.8M797.6 327.1l16.8 16.8m0 -16.8l-16.8 16.8M800.3 327.1l16.8 16.8m0 -16.8l-16.8 16.8M803.0 332.0l16.8 16.8m0 -16.8l-16.8 16.8M805.7 341.6l16.8 16.8m0 -16.8l-16.8 16.8M808.4 355.9l16.8 16.8m0 -16.8l-16.8 16.8M811.1 374.7l16.8 16.8m0 -16.8l-16.8 16.8M813.8 397.5l16.8 16.8m0 -16.8l-16.8 16.8M816.5 424.1l16.8 16.8m0 -16.8l-16.8 16.8M819.2 454.0l16.8 16.8m0 -16.8l-16.8 16.8M821.9 486.8l16.8 16.8m0 -16.8l-16.8 16.8M824.6 522.0l16.8 16.8m0 -16.8l-16.8 16.8M827.3 558.9l16.8 16.8m0 -16.8l-16.8 16.8M830.0 597.1l16.8 16.8m0 -16.8l-16.8 16.8M832.7 635.8l16.8 16.8m0 -16.8l-16.8 16.8M835.4 674.6l16.8 16.8m0 -16.8l-16.8 16.8M838.1 712.8l16.8 16.8m0 -16.8l-16.8 16.8M840.8 749.7l16.8 16.8m0 -16.8l-16.8 16.8M843.5 784.9l16.8 16.8m0 -16.8l-16.8 16.8M846.2 817.7l16.8 16.8m0 -16.8l-16.8 16.8M848.9 847.6l16.8 16.8m0 -16.8l-16.8 16.8M851.6 874.2l16.8 16.8m0 -16.8l-16.8 16.8M854.3 897.0l16.8 16.8m0 -16.8l-16.8 16.8M857.0 915.8l16.8 16.8m0 -16.8l-16.8 16.8M859.7 930.1l16.8 16.8m0 -16.8l-16.8 16.8M862.4 939.7l16.8 16.8m0 -16.8l-16.8 16.8M865.1 944.6l16.8 16.8m0 -16.8l-16.8 16.8M867.8 944.6l16.8 16.8m0 -16.8l-16.8 16.8M870.5 939.7l16.8 16.8m0 -16.8l-16.8 16.8M873.2 930.1l16.8 16.8m0 -16.8l-16.8 16.8M875.9 915.8l16.8 16.8m0 -16.8l-16.8 16.8M878.6 897.0l16.8 16.8m0 -16.8l-16.8 16.8M881.3 874.2l16.8 16.8m0 -16.8l-16.8 16.8M884.0 847.6l16.8 16.8m0 -16.8l-16.8 16.8M886.7 817.7l16.8 16.8m0 -16.8l-16.8 16.8M889.4 784.9l16.8 16.8m0 -16.8l-16.8 16.8M892.1 749.7l16.8 16.8m0 -16.8l-16.8 16.8M894.8 712.8l16.8 16.8m0 -16.8l-16.8 16.8M897.5 674.6l16.8 16.8m0 -16.8l-16.8 16.8M900.2 635.9l16.8 16.8m0 -16.8l-16.8 16.8M902.9 597.1l16.8 16.8m0 -16.8l-16.8 16.8M905.6 558.9l16.8 16.8m0 -16.8l-16.8 16.8M908.3 522.0l16.8 16.8m0 -16.8l-16.8 16.8M911.0 486.8l16.8 16.8m0 -16.8l-16.8 16.8M913.7 454.0l16.8 16.8m0 -16.8l-16.8 16.8M916.4 424.1l16.8 16.8m0 -16.8l-16.8 16.8M919.2 397.5l16.8 16.8m0 -16.8l-16.8 16.8M921.9 374.7l16.8 16.8m0 -16.8l-16.8 16.8M924.6 355.9l16.8 16.8m0 -16.8l-16.8 16.8M927.3 341.6l16.8 16.8m0 -16.8l-16.8 16.8M930.0 332.0l16.8 16.8m0 -16.8l-16.8 16.8M932.7 327.1l16.8 16.8m0 -16.8l-16.8 16.8M935.4 327.1l16.8 16.8m0 -16.8l-16.8 16.8M938.1 332.0l16.8 16.8m0 -16.8l-16.8 16.8M940.8 341.6l16.8 16.8m0 -16.8l-16.8 16.8M943.5 355.9l16.8 16.8m0 -16.8l-16.8 16.8M946.2 374.7l16.8 16.8m0 -16.8l-16.8 16.8M948.9 397.5l16.8 16.8m0 -16.8l-16.8 16.8M951.6 424.1l16.8 16.8m0 -16.8l-16.8 16.8M954.3 454.0l16.8 16.8m0 -16.8l-16.8 16.8M957.0 486.8l16.8 16.8m0 -16.8l-16.8 16.8M959.7 522.0l16.8 16.8m0 -16.8l-16.8 16.8M962.4 558.9l16.8 16.8m0 -16.8l-16.8 16.8M965.1 597.1l16.8 16.8m0 -16.8l-16.8 16.8M967.8 635.8l16.8 16.8m0 -16.8l-16.8 16.8M970.5 674.6l16.8 16.8m0 -16.8l-16.8 16.8M973.2 712.8l16.8 16.8m0 -16.8l-16.8 16.8M975.9 749.7l16.8 16.8m0 -16.8l-16.8 16.8M978.6 784.9l16.8 16.8m0 -16.8l-16.8 16.8M981.3 817.7l16.8 16.8m0 -16.8l-16.8 16.8M984.0 847.6l16.8 16.8m0 -16.8l-16.8 16.8M986.7 874.2l16.8 16.8m0 -16.8l-16.8 16.8M989.4 897.0l16.8 16.8m0 -16.8l-16.8 16.8M992.1 915.8l16.8 16.8m0 -16.8l-16.8 16.8M994.8 930.1l16.8 16.8m0 -16.8l-16.8 16.8M997.5 939.7l16.8 16.8m0 -16.8l-16.8 16.8M1000.2 944.6l16.8 16.8m0 -16.8l-16.8 16.8M1002.9 944.6l16.8 16.8m0 -16.8l-16.8 16.8M1005.6 939.7l16.8 16.8m0 -16.8l-16.8 16.8M1008.3 930.1l16.8 16.8m0 -16.8l-16.8 16.8M1011.0 915.8l16.8 16.8m0 -16.8l-16.8 16.8M1013.7 897.0l16.8 16.8m0 -16.8l-16.8 16.8M1016.4 874.2l16.8 16.8m0 -16.8l-16.8 16.8M1019.1 847.6l16.8 16.8m0 -16.8l-16.8 16.8M1021.8 817.7l16.8 16.8m0 -16.8l-16.8 16.8M1024.5 784.9l16.8 16.8m0 -16.8l-16.8 16.8M1027.2 749.7l16.8 16.8m0 -16.8l-16.8 16.8M1029.9 712.8l16.8 16.8m0 -16.8l-16.8 16.8M1032.6 674.6l16.8 16.8m0 -16.8l-16.8 16.8M1035.3 635.9l16.8 16.8m0 -16.8l-16.8 16.8M1038.0 597.1l16.8 16.8m0 -16.8l-16.8 16.8M1040.7 558.9l16.8 16.8m0 -16.8l-16.8 16.8M1043.4 522.0l16.8 16.8m0 -16.8l-16.8 16.8M1046.1 486.8l16.8 16.8m0 -16.8l-16.8 16.8M1048.8 454.0l16.8 16.8m0 -16.8l-16.8 16.8M1051.5 424.1l16.8 16.8m0 -16.8l-16.8 16.8M1054.2 397.5l16.8 16.8m0 -16.8l-16.8 16.8M1056.9 374.7l16.8 16.8m0 -16.8l-16.8 16.8M1059.6 355.9l16.8 16.8m0 -16.8l-16.8 16.8M1062.3 341.6l16.8 16.8m0 -16.8l-16.8 16.8M1065.0 332.0l16.8 16.8m0 -16.8l-16.8 16.8M1067.7 327.1l16.8 16.8m0 -16.8l-16.8 16.8M1070.4 327.1l16.8 16.8m0 -16.8l-16.8 16.8M1073.1 332.0l16.8 16.8m0 -16.8l-16.8 16.8M1075.8 341.6l16.8 16.8m0 -16.8l-16.8 16.8M1078.5 355.9l16.8 16.8m0 -16.8l-16.8 16.8M1081.2 374.7l16.8 16.8m0 -16.8l-16.8 16.8M1083.9 397.5l16.8 16.8m0 -16.8l-16.8 16.8M1086.7 424.1l16.8 16.8m0 -16.8l-16.8 16.8M1089.4 454.0l16.8 16.8m0 -16.8l-16.8 16.8M1092.1 486.8l16.8 16.8m0 -16.8l-16.8 16.8M1094.8 522.0l16.8 16.8m0 -16.8l-16.8 16.8M1097.5 558.9l16.8 16.8m0 -16.8l-16.8 16.8M1100.2 597.1l16.8 16.8m0 -16.8l-16.8 16.8M1102.9 635.8l16.8 16.8m0 -16.8l-16.8 16.8M1105.6 674.6l16.8 16.8m0 -16.8l-16.8 16.8M1108.3 712.8l16.8 16.8m0 -16.8l-16.8 16.8M1111.0 749.7l16.8 16.8m0 -16.8l-16.8 16.8M1113.7 784.9l16.8 16.8m0 -16.8l-16.8 16.8M1116.4 817.7l16.8 16.8m0 -16.8l-16.8 16.8M1119.1 847.6l16.8 16.8m0 -16.8l-16.8 16.8M1121.8 874.2l16.8 16.8m0 -16.8l-16.8 16.8M1124.5 897.0l16.8 16.8m0 -16.8l-16.8 16.8M1127.2 915.8l16.8 16.8m0 -16.8l-16.8 16.8M1129.9 930.1l16.8 16.8m0 -16.8l-16.8 16.8M1132.6 939.7l16.8 16.8m0 -16.8l-16.8 16.8M1135.3 944.6l16.8 16.8m0 -16.8l-16.8 16.8M1138.0 944.6l16.8 16.8m0 -16.8l-16.8 16.8M1140.7 939.7l16.8 16.8m0 -16.8l-16.8 16.8M1143.4 930.1l16.8 16.8m0 -16.8l-16.8 16.8M1146.1 915.8l16.8 16.8m0 -16.8l-16.8 16.8M1148.8 897.0l16.8 16.8m0 -16.8l-16.8 16.8M1151.5 874.2l16.8 16.8m0 -16.8l-16.8 16.8M1154.2 847.6l16.8 16.8m0 -16.8l-16.8 16.8M1156.9 817.7l16.8 16.8m0 -16.8l-16.8 16.8M1159.6 784.9l16.8 16.8m0 -16.8l-16.8 16.8M1162.3 749.7l16.8 16.8m0 -16.8l-16.8 16.8M1165.0 712.8l16.8 16.8m0 -16.8l-16.8 16.8M1167.7 674.6l16.8 16.8m0 -16.8l-16.8 16.8M1170.4 635.9l16.8 16.8m0 -16.8l-16.8 16.8M1173.1 597.1l16.8 16.8m0 -16.8l-16.8 16.8M1175.8 558.9l16.8 16.8m0 -16.8l-16.8 16.8M1178.5 522.0l16.8 16.8m0 -16.8l-16.8 16.8M1181.2 486.8l16.8 16.8m0 -16.8l-16.8 16.8M1183.9 454.0l16.8 16.8m0 -16.8l-16.8 16.8M1186.6 424.1l16.8 16.8m0 -16.8l-16.8 16.8M1189.3 397.5l16.8 16.8m0 -16.8l-16.8 16.8M1192.0 374.7l16.8 16.8m0 -16.8l-16.8 16.8M1194.7 355.9l16.8 16.8m0 -16.8l-16.8 16.8M1197.4 341.6l16.8 16.8m0 -16.8l-16.8 16.8M1200.1 332.0l16.8 16.8m0 -16.8l-16.8 16.8M1202.8 327.1l16.8 16.8m0 -16.8l-16.8 16.8M1205.5 327.1l16.8 16.8m0 -16.8l-16.8 16.8M1208.2 332.0l16.8 16.8m0 -16.8l-16.8 16.8M1210.9 341.6l16.8 16.8m0 -16.8l-16.8 16.8M1213.6 355.9l16.8 16.8m0 -16.8l-16.8 16.8M1216.3 374.7l16.8 16.8m0 -16.8l-16.8 16.8M1219.0 397.5l16.8 16.8m0 -16.8l-16.8 16.8M1221.7 424.1l16.8 16.8m0 -16.8l-16.8 16.8M1224.4 454.0l16.8 16.8m0 -16.8l-16.8 16.8M1227.1 486.8l16.8 16.8m0 -16.8l-16.8 16.8M1229.8 522.0l16.8 16.8m0 -16.8l-16.8 16.8M1232.5 558.9l16.8 16.8m0 -16.8l-16.8 16.8M1235.2 597.1l16.8 16.8m0 -16.8l-16.8 16.8M1237.9 635.8l16.8 16.8m0 -16.8l-16.8 16.8M1240.6 674.6l16.8 16.8m0 -16.8l-16.8 16.8M1243.3 712.8l16.8 16.8m0 -16.8l-16.8 16.8M1246.0 749.7l16.8 16.8m0 -16.8l-16.8 16.8M1248.7 784.9l16.8 16.8m0 -16.8l-16.8 16.8M1251.4 817.7l16.8 16.8m0 -16.8l-16.8 16.8M1254.1 847.6l16.8 16.8m0 -16.8l-16.8 16.8M1256.9 874.2l16.8 16.8m0 -16.8l-16.8 16.8M1259.6 897.0l16.8 16.8m0 -16.8l-16.8 16.8M1262.3 915.8l16.8 16.8m0 -16.8l-16.8 16.8M1265.0 930.1l16.8 16.8m0 -16.8l-16.8 16.8M1267.7 939.7l16.8 16.8m0 -16.8l-16.8 16.8M1270.4 944.6l16.8 16.8m0 -16.8l-16.8 16.8M1273.1 944.6l16.8 16.8m0 -16.8l-16.8 16.8M1275.8 939.7l16.8 16.8m0 -16.8l-16.8 16.8M1278.5 930.1l16.8 16.8m0 -16.8l-16.8 16.8M1281.2 915.8l16.8 16.8m0 -16.8l-16.8 16.8M1283.9 897.0l16.8 16.8m0 -16.8l-16.8 16.8M1286.6 874.2l16.8 16.8m0 -16.8l-16.8 16.8M1289.3 847.6l16.8 16.8m0 -16.8l-16.8 16.8M1292.0 817.7l16.8 16.8m0 -16.8l-16.8 16.8M1294.7 784.9l16.8 16.8m0 -16.8l-16.8 16.8M1297.4 749.7l16.8 16.8m0 -16.8l-16.8 16.8M1300.1 712.8l16.8 16.8m0 -16.8l-16.8 16.8M1302.8 674.6l16.8 16.8m0 -16.8l-16.8 16.8M1305.5 635.9l16.8 16.8m0 -16.8l-16.8 16.8M1308.2 597.1l16.8 16.8m0 -16.8l-16.8 16.8M1310.9 558.9l16.8 16.8m0 -16.8l-16.8 16.8M1313.6 522.0l16.8 16.8m0 -16.8l-16.8 16.8M1316.3 486.8l16.8 16.8m0 -16.8l-16.8 16.8M1319.0 454.0l16.8 16.8m0 -16.8l-16.8 16.8M1321.7 424.1l16.8 16.8m0 -16.8l-16.8 16.8M1324.4 397.5l16.8 16.8m0 -16.8l-16.8 16.8M1327.1 374.7l16.8 16.8m0 -16.8l-16.8 16.8M1329.8 355.9l16.8 16.8m0 -16.8l-16.8 16.8M1332.5 341.6l16.8 16.8m0 -16.8l-16.8 16.8M1335.2 332.0l16.8 16.8m0 -16.8l-16.8 16.8M1337.9 327.1l16.8 16.8m0 -16.8l-16.8 16.8M1340.6 327.1l16.8 16.8m0 -16.8l-16.8 16.8M1343.3 332.0l16.8 16.8m0 -16.8l-16.8 16.8M1346.0 341.6l16.8 16.8m0 -16.8l-16.8 16.8M1348.7 355.9l16.8 16.8m0 -16.8l-16.8 16.8M1351.4 374.7l16.8 16.8m0 -16.8l-16.8 16.8M1354.1 397.5l16.8 16.8m0 -16.8l-16.8 16.8M1356.8 424.1l16.8 16.8m0 -16.8l-16.8 16.8M1359.5 454.0l16.8 16.8m0 -16.8l-16.8 16.8M1362.2 486.8l16.8 16.8m0 -16.8l-16.8 16.8M1364.9 522.0l16.8 16.8m0 -16.8l-16.8 16.8M1367.6 558.9l16.8 16.8m0 -16.8l-16.8 16.8M1370.3 597.1l16.8 16.8m0 -16.8l-16.8 16.8M1373.0 635.9l16.8 16.8m0 -16.8l-16.8 16.8M1375.7 674.6l16.8 16.8m0 -16.8l-16.8 16.8M1378.4 712.8l16.8 16.8m0 -16.8l-16.8 16.8M1381.1 749.7l16.8 16.8m0 -16.8l-16.8 16.8M1383.8 784.9l16.8 16.8m0 -16.8l-16.8 16.8M1386.5 817.7l16.8 16.8m0 -16.8l-16.8 16.8M1389.2 847.6l16.8 16.8m0 -16.8l-16.8 16.8M1391.9 874.2l16.8 16.8m0 -16.8l-16.8 16.8M1394.6 897.0l16.8 16.8m0 -16.8l-16.8 16.8M1397.3 915.8l16.8 16.8m0 -16.8l-16.8 16.8M1400.0 930.1l16.8 16.8m0 -16.8l-16.8 16.8M1402.7 939.7l16.8 16.8m0 -16.8l-16.8 16.8M1405.4 944.6l16.8 16.8m0 -16.8l-16.8 16.8M1408.1 944.6l16.8 16.8m0 -16.8l-16.8 16.8M1410.8 939.7l16.8 16.8m0 -16.8l-16.8 16.8M1413.5 930.1l16.8 16.8m0 -16.8l-16.8 16.8M1416.2 915.8l16.8 16.8m0 -16.8l-16.8 16.8M1418.9 897.0l16.8 16.8m0 -16.8l-16.8 16.8M1421.6 874.2l16.8 16.8m0 -16.8l-16.8 16.8M1424.4 847.6l16.8 16.8m0 -16.8l-16.8 16.8M1427.1 817.7l16.8 16.8m0 -16.8l-16.8 16.8M1429.8 784.9l16.8 16.8m0 -16.8l-16.8 16.8M1432.5 749.7l16.8 16.8m0 -16.8l-16.8 16.8M1435.2 712.8l16.8 16.8m0 -16.8l-16.8 16.8M1437.9 674.6l16.8 16.8m0 -16.8l-16.8 16.8M1440.6 635.9l16.8 16.8m0 -16.8l-16.8 16.8M1443.3 597.1l16.8 16.8m0 -16.8l-16.8 16.8M1446.0 558.9l16.8 16.8m0 -16.8l-16.8 16.8M1448.7 522.0l16.8 16.8m0 -16.8l-16.8 16.8M1451.4 486.8l16.8 16.8m0 -16.8l-16.8 16.8M1454.1 454.0l16.8 16.8m0 -16.8l-16.8 16.8M1456.8 424.1l16.8 16.8m0 -16.8l-16.8 16.8M1459.5 397.5l16.8 16.8m0 -16.8l-16.8 16.8M1462.2 374.7l16.8 16.8m0 -16.8l-16.8 16.8M1464.9 355.9l16.8 16.8m0 -16.8l-16.8 16.8M1467.6 341.6l16.8 16.8m0 -16.8l-16.8 16.8M1470.3 332.0l16.8 16.8m0 -16.8l-16.8 16.8M1473.0 327.1l16.8 16.8m0 -16.8l-16.8 16.8M1475.7 327.1l16.8 16.8m0 -16.8l-16.8 16.8M1478.4 332.0l16.8 16.8m0 -16.8l-16.8 16.8M1481.1 341.6l16.8 16.8m0 -16.8l-16.8 16.8M1483.8 355.9l16.8 16.8m0 -16.8l-16.8 16.8M1486.5 374.7l16.8 16.8m0 -16.8l-16.8 16.8M1489.2 397.5l16.8 16.8m0 -16.8l-16.8 16.8M1491.9 424.1l16.8 16.8m0 -16.8l-16.8 16.8M1494.6 454.0l16.8 16.8m0 -16.8l-16.8 16.8M1497.3 486.8l16.8 16.8m0 -16.8l-16.8 16.8M1500.0 522.0l16.8 16.8m0 -16.8l-16.8 16.8M1502.7 558.9l16.8 16.8m0 -16.8l-16.8 16.8M1505.4 597.1l16.8 16.8m0 -16.8l-16.8 16.8M1508.1 635.9l16.8 16.8m0 -16.8l-16.8 16.8M1510.8 674.6l16.8 16.8m0 -16.8l-16.8 16.8M1513.5 712.8l16.8 16.8m0 -16.8l-16.8 16.8M1516.2 749.7l16.8 16.8m0 -16.8l-16.8 16.8M1518.9 784.9l16.8 16.8m0 -16.8l-16.8 16.8M1521.6 817.7l16.8 16.8m0 -16.8l-16.8 16.8M1524.3 847.6l16.8 16.8m0 -16.8l-16.8 16.8M1527.0 874.2l16.8 16.8m0 -16.8l-16.8 16.8M1529.7 897.0l16.8 16.8m0 -16.8l-16.8 16.8M1532.4 915.8l16.8 16.8m0 -16.8l-16.8 16.8M1535.1 930.1l16.8 16.8m0 -16.8l-16.8 16.8M1537.8 939.7l16.8 16.8m0 -16.8l-16.8 16.8M1540.5 944.6l16.8 16.8m0 -16.8l-16.8 16.8M1543.2 944.6l16.8 16.8m0 -16.8l-16.8 16.8M1545.9 939.7l16.8 16.8m0 -16.8l-16.8 16.8M1548.6 930.1l16.8 16.8m0 -16.8l-16.8 16.8M1551.3 915.8l16.8 16.8m0 -16.8l-16.8 16.8M1554.0 897.0l16.8 16.8m0 -16.8l-16.8 16.8M1556.7 874.2l16.8 16.8m0 -16.8l-16.8 16.8M1559.4 847.6l16.8 16.8m0 -16.8l-16.8 16.8M1562.1 817.7l16.8 16.8m0 -16.8l-16.8 16.8M1564.8 784.9l16.8 16.8m0 -16.8l-16.8 16.8M1567.5 749.7l16.8 16.8m0 -16.8l-16.8 16.8M1570.2 712.8l16.8 16.8m0 -16.8l-16.8 16.8M1572.9 674.6l16.8 16.8m0 -16.8l-16.8 16.8M1575.6 635.9l16.8 16.8m0 -16.8l-16.8 16.8M1578.3 597.1l16.8 16.8m0 -16.8l-16.8 16.8M1581.0 558.9l16.8 16.8m0 -16.8l-16.8 16.8M1583.7 522.0l16.8 16.8m0 -16.8l-16.8 16.8M1586.4 486.8l16.8 16.8m0 -16.8l-16.8 16.8M1589.1 454.0l16.8 16.8m0 -16.8l-16.8 16.8M1591.8 424.1l16.8 16.8m0 -16.8l-16.8 16.8M1594.6 397.5l16.8 16.8m0 -16.8l-16.8 16.8M1597.3 374.7l16.8 16.8m0 -16.8l-16.8 16.8M1600.0 355.9l16.8 16.8m0 -16.8l-16.8 16.8M1602.7 341.6l16.8 16.8m0 -16.8l-16.8 16.8M1605.4 332.0l16.8 16.8m0 -16.8l-16.8 16.8M1608.1 327.1l16.8 16.8m0 -16.8l-16.8 16.8M1610.8 327.1l16.8 16.8m0 -16.8l-16.8 16.8M1613.5 332.0l16.8 16.8m0 -16.8l-16.8 16.8M1616.2 341.6l16.8 16.8m0 -16.8l-16.8 16.8M1618.9 355.9l16.8 16.8m0 -16.8l-16.8 16.8M1621.6 374.7l16.8 16.8m0 -16.8l-16.8 16.8M1624.3 397.5l16.8 16.8m0 -16.8l-16.8 16.8M1627.0 424.1l16.8 16.8m0 -16.8l-16.8 16.8M1629.7 454.0l16.8 16.8m0 -16.8l-16.8 16.8M1632.4 486.8l16.8 16.8m0 -16.8l-16.8 16.8M1635.1 522.0l16.8 16.8m0 -16.8l-16.8 16.8M1637.8 558.9l16.8 16.8m0 -16.8l-16.8 16.8M1640.5 597.1l16.8 16.8m0 -16.8l-16.8 16.8M1643.2 635.8l16.8 16.8m0 -16.8l-16.8 16.8M1645.9 674.6l16.8 16.8m0 -16.8l-16.8 16.8M1648.6 712.8l16.8 16.8m0 -16.8l-16.8 16.8M1651.3 749.7l16.8 16.8m0 -16.8l-16.8 16.8M1654.0 784.9l16.8 16.8m0 -16.8l-16.8 16.8M1656.7 817.7l16.8 16.8m0 -16.8l-16.8 16.8M1659.4 847.6l16.8 16.8m0 -16.8l-16.8 16.8M1662.1 874.2l16.8 16.8m0 -16.8l-16.8 16.8M1664.8 897.0l16.8 16.8m0 -16.8l-16.8 16.8M1667.5 915.8l16.8 16.8m0 -16.8l-16.8 16.8M1670.2 930.1l16.8 16.8m0 -16.8l-16.8 16.8M1672.9 939.7l16.8 16.8m0 -16.8l-16.8 16.8M1675.6 944.6l16.8 16.8m0 -16.8l-16.8 16.8M1678.3 944.6l16.8 16.8m0 -16.8l-16.8 16.8M1681.0 939.7l16.8 16.8m0 -16.8l-16.8 16.8M1683.7 930.1l16.8 16.8m0 -16.8l-16.8 16.8M1686.4 915.8l16.8 16.8m0 -16.8l-16.8 16.8M1689.1 897.0l16.8 16.8m0 -16.8l-16.8 16.8M1691.8 874.2l16.8 16.8m0 -16.8l-16.8 16.8M1694.5 847.6l16.8 16.8m0 -16.8l-16.8 16.8M1697.2 817.7l16.8 16.8m0 -16.8l-16.8 16.8M1699.9 784.9l16.8 16.8m0 -16.8l-16.8 16.8M1702.6 749.7l16.8 16.8m0 -16.8l-16.8 16.8M1705.3 712.8l16.8 16.8m0 -16.8l-16.8 16.8M1708.0 674.6l16.8 16.8m0 -16.8l-16.8 16.8M1710.7 635.9l16.8 16.8m0 -16.8l-16.8 16.8M1713.4 597.1l16.8 16.8m0 -16.8l-16.8 16.8M1716.1 558.9l16.8 16.8m0 -16.8l-16.8 16.8M1718.8 522.0l16.8 16.8m0 -16.8l-16.8 16.8M1721.5 486.8l16.8 16.8m0 -16.8l-16.8 16.8M1724.2 454.0l16.8 16.8m0 -16.8l-16.8 16.8M1726.9 424.1l16.8 16.8m0 -16.8l-16.8 16.8M1729.6 397.5l16.8 16.8m0 -16.8l-16.8 16.8M1732.3 374.7l16.8 16.8m0 -16.8l-16.8 16.8M1735.0 355.9l16.8 16.8m0 -16.8l-16.8 16.8M1737.7 341.6l16.8 16.8m0 -16.8l-16.8 16.8M1740.4 332.0l16.8 16.8m0 -16.8l-16.8 16.8M1743.1 327.1l16.8 16.8m0 -16.8l-16.8 16.8M1745.8 327.1l16.8 16.8m0 -16.8l-16.8 16.8M1748.5 332.0l16.8 16.8m0 -16.8l-16.8 16.8M1751.2 341.6l16.8 16.8m0 -16.8l-16.8 16.8M1753.9 355.9l16.8 16.8m0 -16.8l-16.8 16.8M1756.6 374.7l16.8 16.8m0 -16.8l-16.8 16.8M1759.3 397.5l16.8 16.8m0 -16.8l-16.8 16.8M1762.1 424.1l16.8 16.8m0 -16.8l-16.8 16.8M1764.8 454.0l16.8 16.8m0 -16.8l-16.8 16.8M1767.5 486.8l16.8 16.8m0 -16.8l-16.8 16.8M1770.2 522.0l16.8 16.8m0 -16.8l-16.8 16.8M1772.9 558.9l16.8 16.8m0 -16.8l-16.8 16.8M1775.6 597.1l16.8 16.8m0 -16.8l-16.8 16.8M1778.3 635.8l16.8 16.8m0 -16.8l-16.8 16.8M1781.0 674.6l16.8 16.8m0 -16.8l-16.8 16.8M1783.7 712.8l16.8 16.8m0 -16.8l-16.8 16.8M1786.4 749.7l16.8 16.8m0 -16.8l-16.8 16.8M1789.1 784.9l16.8 16.8m0 -16.8l-16.8 16.8M1791.8 817.7l16.8 16.8m0 -16.8l-16.8 16.8M1794.5 847.6l16.8 16.8m0 -16.8l-16.8 16.8M1797.2 874.2l16.8 16.8m0 -16.8l-16.8 16.8M1799.9 897.0l16.8 16.8m0 -16.8l-16.8 16.8M1802.6 915.8l16.8 16.8m0 -16.8l-16.8 16.8M1805.3 930.1l16.8 16.8m0 -16.8l-16.8 16.8M1808.0 939.7l16.8 16.8m0 -16.8l-16.8 16.8M1810.7 944.6l16.8 16.8m0 -16.8l-16.8 16.8M1813.4 944.6l16.8 16.8m0 -16.8l-16.8 16.8M1816.1 939.7l16.8 16.8m0 -16.8l-16.8 16.8M1818.8 930.1l16.8 16.8m0 -16.8l-16.8 16.8M1821.5 915.8l16.8 16.8m0 -16.8l-16.8 16.8M1824.2 897.0l16.8 16.8m0 -16.8l-16.8 16.8M1826.9 874.2l16.8 16.8m0 -16.8l-16.8 16.8M1829.6 847.6l16.8 16.8m0 -16.8l-16.8 16.8M1832.3 817.7l16.8 16.8m0 -16.8l-16.8 16.8M1835.0 784.9l16.8 16.8m0 -16.8l-16.8 16.8M1837.7 749.7l16.8 16.8m0 -16.8l-16.8 16.8M1840.4 712.8l16.8 16.8m0 -16.8l-16.8 16.8M1843.1 674.6l16.8 16.8m0 -16.8l-16.8 16.8"/>
<path d="M476.4 988.0v3.5M489.9 988.0v3.5M503.4 988.0v7M516.9 988.0v3.5M530.4 988.0v3.5M543.9 988.0v3.5M557.4 988.0v3.5M570.9 988.0v7M584.4 988.0v3.5M598.0 988.0v3.5M611.5 988.0v3.5M625.0 988.0v3.5M638.5 988.0v7M652.0 988.0v3.5M665.5 988.0v3.5M679.0 988.0v3.5M692.5 988.0v3.5M706.0 988.0v7M719.5 988.0v3.5M733.0 988.0v3.5M746.5 988.0v3.5M760.1 988.0v3.5M773.6 988.0v7M787.1 988.0v3.5M800.6 988.0v3.5M814.1 988.0v3.5M827.6 988.0v3.5M841.1 988.0v7M854.6 988.0v3.5M868.1 988.0v3.5M881.6 988.0v3.5M895.1 988.0v3.5M908.6 988.0v7M922.1 988.0v3.5M935.7 988.0v3.5M949.2 988.0v3.5M962.7 988.0v3.5M976.2 988.0v7M989.7 988.0v3.5M1003.2 988.0v3.5M1016.7 988.0v3.5M1030.2 988.0v3.5M1043.7 988.0v7M1057.2 988.0v3.5M1070.7 988.0v3.5M1084.2 988.0v3.5M1097.8 988.0v3.5M1111.3 988.0v7M1124.8 988.0v3.5M1138.3 988.0v3.5M1151.8 988.0v3.5M1165.3 988.0v3.5M1178.8 988.0v7M1192.3 988.0v3.5M1205.8 988.0v3.5M1219.3 988.0v3.5M1232.8 988.0v3.5M1246.3 988.0v7M1259.8 988.0v3.5M1273.4 988.0v3.5M1286.9 988.0v3.5M1300.4 988.0v3.5M1313.9 988.0v7M1327.4 988.0v3.5M1340.9 988.0v3.5M1354.4 988.0v3.5M1367.9 988.0v3.5M1381.4 988.0v7M1394.9 988.0v3.5M1408.4 988.0v3.5M1421.9 988.0v3.5M1435.5 988.0v3.5M1449.0 988.0v7M1462.5 988.0v3.5M1476.0 988.0v3.5M1489.5 988.0v3.5M1503.0 988.0v3.5M1516.5 988.0v7M1530.0 988.0v3.5M1543.5 988.0v3.5M1557.0 988.0v3.5M1570.5 988.0v3.5M1584.0 988.0v7M1597.5 988.0v3.5M1611.1 988.0v3.5M1624.6 988.0v3.5M1638.1 988.0v3.5M1651.6 988.0v7M1665.1 988.0v3.5M1678.6 988.0v3.5M1692.1 988.0v3.5M1705.6 988.0v3.5M1719.1 988.0v7M1732.6 988.0v3.5M1746.1 988.0v3.5M1759.6 988.0v3.5M1773.2 988.0v3.5M1786.7 988.0v7M1800.2 988.0v3.5M1813.7 988.0v3.5M1827.2 988.0v3.5M1840.7 988.0v3.5M1854.2 988.0v7M1867.7 988.0v3.5M1881.2 988.0v3.5M468.0 984.5h-3.5M468.0 969.1h-3.5M468.0 953.6h-7M468.0 938.1h-3.5M468.0 922.7h-3.5M468.0 907.2h-3.5M468.0 891.7h-3.5M468.0 876.3h-7M468.0 860.8h-3.5M468.0 845.3h-3.5M468.0 829.9h-3.5M468.0 814.4h-3.5M468.0 798.9h-7M468.0 783.5h-3.5M468.0 768.0h-3.5M468.0 752.5h-3.5M468.0 737.1h-3.5M468.0 721.6h-7M468.0 706.1h-3.5M468.0 690.7h-3.5M468.0 675.2h-3.5M468.0 659.7h-3.5M468.0 644.2h-7M468.0 628.8h-3.5M468.0 613.3h-3.5M468.0 597.8h-3.5M468.0 582.4h-3.5M468.0 566.9h-7M468.0 551.4h-3.5M468.0 536.0h-3.5M468.0 520.5h-3.5M468.0 505.0h-3.5M468.0 489.6h-7M468.0 474.1h-3.5M468.0 458.6h-3.5M468.0 443.2h-3.5M468.0 427.7h-3.5M468.0 412.2h-7M468.0 396.8h-3.5M468.0 381.3h-3.5M468.0 365.8h-3.5M468.0 350.4h-3.5M468.0 334.9h-7M468.0 319.4h-3.5M468.0 304.0h-3.5" stroke="#222" stroke-width="1.6" fill="none"/>
<rect x="468.0" y="300.0" width="1421.0" height="688.0" fill="none" stroke="#2a2a2a" stroke-width="1.800"/>
<g font-family="'Liberation Sans','DejaVu Sans',sans-serif" font-size="13.3" fill="#111">
<text x="503.4" y="1007.7" text-anchor="middle">0</text>
<text x="570.9" y="1007.7" text-anchor="middle">0.05</text>
<text x="638.5" y="1007.7" text-anchor="middle">0.1</text>
<text x="706.0" y="1007.7" text-anchor="middle">0.15</text>
<text x="773.6" y="1007.7" text-anchor="middle">0.2</text>
<text x="841.1" y="1007.7" text-anchor="middle">0.25</text>
<text x="908.6" y="1007.7" text-anchor="middle">0.3</text>
<text x="976.2" y="1007.7" text-anchor="middle">0.35</text>
<text x="1043.7" y="1007.7" text-anchor="middle">0.4</text>
<text x="1111.3" y="1007.7" text-anchor="middle">0.45</text>
<text x="1178.8" y="1007.7" text-anchor="middle">0.5</text>
<text x="1246.3" y="1007.7" text-anchor="middle">0.55</text>
<text x="1313.9" y="1007.7" text-anchor="middle">0.6</text>
<text x="1381.4" y="1007.7" text-anchor="middle">0.65</text>
<text x="1449.0" y="1007.7" text-anchor="middle">0.7</text>
<text x="1516.5" y="1007.7" text-anchor="middle">0.75</text>
<text x="1584.0" y="1007.7" text-anchor="middle">0.8</text>
<text x="1651.6" y="1007.7" text-anchor="middle">0.85</text>
<text x="1719.1" y="1007.7" text-anchor="middle">0.9</text>
<text x="1786.7" y="1007.7" text-anchor="middle">0.95</text>
<text x="1854.2" y="1007.7" text-anchor="middle">1</text>
<text x="456.5" y="957.5" text-anchor="end">-1</text>
<text x="456.5" y="880.2" text-anchor="end">-0.75</text>
<text x="456.5" y="802.8" text-anchor="end">-0.5</text>
<text x="456.5" y="725.5" text-anchor="end">-0.25</text>
<text x="456.5" y="648.1" text-anchor="end">0</text>
<text x="456.5" y="570.8" text-anchor="end">0.25</text>
<text x="456.5" y="493.5" text-anchor="end">0.5</text>
<text x="456.5" y="416.1" text-anchor="end">0.75</text>
<text x="456.5" y="338.8" text-anchor="end">1</text>
</g>
<g font-family="'DejaVu Sans','Liberation Sans',sans-serif" fill="#1a1a1a">
<text x="1177.5" y="291" text-anchor="middle" font-size="22" font-weight="bold" fill="#000" letter-spacing="-0.4">Signal1, Resample</text>
<text x="1177.8" y="1031.5" text-anchor="middle" font-size="16.7" letter-spacing="0.35">Time (sec)</text>
<text transform="translate(418 643.6) rotate(-90)" text-anchor="middle" font-size="16.7" letter-spacing="0.15">Amplitude</text>
<rect x="1753.8" y="942.1" width="128.8" height="40.2" fill="#fff" stroke="#2a2a2a" stroke-width="1.7"/>
<path d="M1759 952.1H1800" stroke="#1f77b4" stroke-opacity="0.8" stroke-width="2"/><circle cx="1779.6" cy="952.1" r="3.1" fill="#1f77b4"/>
<path d="M1771.2 964.3l16.800 16m0 -16l-16.800 16" stroke="#ff7f0e" stroke-opacity="0.72" stroke-width="1.2" fill="none"/>
<text x="1807.6" y="955.9" font-size="12.800">Signal1</text>
<text x="1807.6" y="975.9" font-size="12.800">Resample</text>
</g></svg>
<div id="status" class="abs">
<span class="abs" style="left:9px;top:0;white-space:nowrap;letter-spacing:.13px">C:₩Users₩Administrator₩Documents₩Malmijal-M₩Samples₩resampling.mmj</span>
<span class="abs" style="right:30px;top:0;white-space:nowrap">No. of Samples: 500</span>
<svg class="abs" style="left:1899px;top:11px" width="18" height="18" viewBox="1899 1061 18 18"><g fill="#93a4b8"><rect x="1911.800" y="1062.800" width="2.500" height="2.500"/><rect x="1906.300" y="1068.300" width="2.500" height="2.500"/><rect x="1911.800" y="1068.300" width="2.500" height="2.500"/><rect x="1900.800" y="1073.800" width="2.500" height="2.500"/><rect x="1906.300" y="1073.800" width="2.500" height="2.500"/><rect x="1911.800" y="1073.800" width="2.500" height="2.500"/></g></svg>

</div>
</body>
</html>
